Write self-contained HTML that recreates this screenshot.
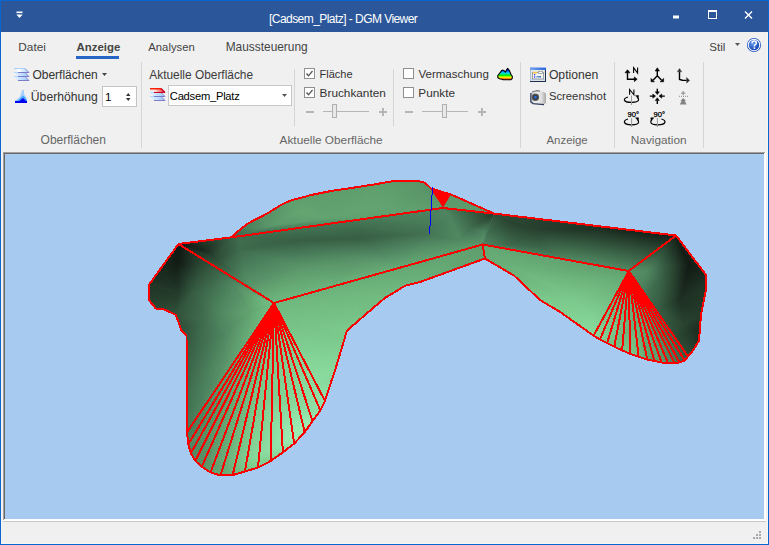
<!DOCTYPE html>
<html><head><meta charset="utf-8">
<style>
html,body{margin:0;padding:0;}
body{width:769px;height:545px;overflow:hidden;position:relative;background:#f0f0f0;font-family:"Liberation Sans",sans-serif;}
.a{position:absolute;}
.t{position:absolute;white-space:nowrap;line-height:1;color:#3b3b3b;}
.sep{position:absolute;width:1px;background:#d5d5d5;}
.cb{position:absolute;width:9px;height:9px;border:1px solid #8f8f8f;background:#fff;}
</style></head><body>
<!-- window frame -->
<div class="a" style="left:0;top:0;width:769px;height:545px;background:#0966d0;"></div>
<div class="a" style="left:1px;top:1px;width:767px;height:543px;background:#f0f0f0;"></div>
<div class="a" style="left:1px;top:1px;width:767px;height:31px;background:#2b579a;"></div>
<div class="a" style="left:1px;top:32px;width:1px;height:512px;background:#f8f5f1;"></div>
<div class="a" style="left:767px;top:32px;width:1px;height:512px;background:#f8f5f1;"></div>
<div class="a" style="left:1px;top:543px;width:767px;height:1px;background:#f8f5f1;"></div>
<!-- title bar -->
<svg class="a" style="left:0;top:0" width="769" height="32">
  <rect x="16.5" y="11.5" width="6" height="1.6" fill="#fff"/>
  <path d="M16.3 14.6 L22.7 14.6 L19.5 18 Z" fill="#fff"/>
  <rect x="673" y="15.5" width="6" height="3" fill="#fff"/>
  <rect x="708.5" y="10.5" width="8" height="8" fill="none" stroke="#fff" stroke-width="1"/>
  <rect x="708" y="10" width="9" height="2" fill="#fff"/>
  <path d="M745 11.5 L752 18.5 M752 11.5 L745 18.5" stroke="#fff" stroke-width="1.4"/>
</svg>
<div class="t" style="left:269px;top:13px;font-size:12px;letter-spacing:-0.55px;color:#fff;">[Cadsem_Platz] - DGM Viewer</div>

<!-- tabs -->
<div class="t" style="left:18.3px;top:42px;font-size:11.8px;color:#444;">Datei</div>
<div class="t" style="left:76.6px;top:42px;font-size:11.4px;font-weight:bold;color:#444;">Anzeige</div>
<div class="a" style="left:76px;top:56px;width:43px;height:3px;background:#2766c6;"></div>
<div class="t" style="left:148.3px;top:42px;font-size:11.3px;color:#444;">Analysen</div>
<div class="t" style="left:225.7px;top:42px;font-size:11.9px;color:#444;">Maussteuerung</div>
<div class="t" style="left:709.3px;top:41px;font-size:11.6px;color:#444;">Stil</div>
<svg class="a" style="left:0;top:30px" width="769" height="30">
  <path d="M735 13 L740 13 L737.5 16 Z" fill="#555"/>
  <defs><radialGradient id="hg" cx="0.4" cy="0.35" r="0.7"><stop offset="0" stop-color="#6aa0f0"/><stop offset="1" stop-color="#0a3cb0"/></radialGradient></defs>
  <circle cx="754" cy="15" r="7" fill="#1b4fc0"/>
  <circle cx="754" cy="15" r="6.2" fill="#fff"/>
  <circle cx="754" cy="15" r="5.2" fill="url(#hg)"/>
  <path d="M752 13.2 Q752 11 754.2 11 Q756.4 11 756.4 13 Q756.4 14.3 754.6 15.2 L754.4 16.5" fill="none" stroke="#fff" stroke-width="1.5"/>
  <rect x="753.6" y="17.4" width="1.6" height="1.6" fill="#fff"/>
</svg>

<!-- separators -->
<div class="sep" style="left:141px;top:62px;height:86px;"></div>
<div class="sep" style="left:294px;top:69px;height:57px;"></div>
<div class="sep" style="left:393px;top:69px;height:57px;"></div>
<div class="sep" style="left:520px;top:62px;height:86px;"></div>
<div class="sep" style="left:614px;top:62px;height:86px;"></div>
<div class="sep" style="left:703px;top:62px;height:86px;"></div>

<!-- group 1 -->
<svg class="a" style="left:0;top:0" width="32" height="106">
  <defs><linearGradient id="lg1" x1="0" x2="1"><stop offset="0" stop-color="#e6f2ff"/><stop offset="0.5" stop-color="#c4e0ff"/><stop offset="1" stop-color="#94c4f4"/></linearGradient>
  <linearGradient id="lg1t" x1="0" x2="1"><stop offset="0" stop-color="#cce4ff"/><stop offset="0.3" stop-color="#ffffff"/><stop offset="1" stop-color="#a8d0f8"/></linearGradient></defs>
  <path d="M14 76.5 H25 L29 80.5 H18 Z" fill="url(#lg1)"/><rect x="14" y="76" width="4" height="1" fill="#b4d8fc"/><rect x="18" y="80" width="11" height="1" fill="#7c7cc8"/><path d="M25 76.5 L29 80.5" stroke="#8a8ad0" stroke-width="1"/>
  <path d="M14 72.5 H25 L29 76.5 H18 Z" fill="url(#lg1)"/><rect x="14" y="72" width="4" height="1" fill="#b4d8fc"/><rect x="18" y="76" width="11" height="1" fill="#7c7cc8"/><path d="M25 72.5 L29 76.5" stroke="#8a8ad0" stroke-width="1"/>
  <path d="M14 68.5 H25 L29 72.5 H18 Z" fill="url(#lg1t)"/><rect x="14" y="68" width="11" height="1" fill="#a8d0f8"/><rect x="18" y="72" width="11" height="1" fill="#7c7cc8"/><path d="M25 68.5 L29 72.5" stroke="#8a8ad0" stroke-width="1"/>
  <path d="M15 103 L15 100.5 L19 98 L21 94 L22 90 L24 90 L24 94 L26 97 L27 100 L27 103 Z" fill="#a8d0ff"/>
  <path d="M17 101 L20.5 98 L23 95.5 L25.5 98 L27 100.5 L27 103 L15 103 Z" fill="#44a4ff"/>
  <path d="M15 101 L19.5 101 L23 98 L26 101 L27 101 L27 103 L15 103 Z" fill="#0000f0"/>
</svg>
<div class="t" style="left:32.4px;top:69px;font-size:12px;color:#333;">Oberflächen</div>
<svg class="a" style="left:100px;top:70px" width="10" height="8"><path d="M2 3 L7 3 L4.5 6 Z" fill="#444"/></svg>
<div class="t" style="left:30.8px;top:91px;font-size:12.2px;color:#333;">Überhöhung</div>
<div class="a" style="left:102px;top:86px;width:33px;height:19px;border:1px solid #c4c4c4;background:#fff;"></div>
<div class="t" style="left:105px;top:91px;font-size:11.6px;color:#000;">1</div>
<svg class="a" style="left:120px;top:88px" width="16" height="18"><path d="M6 8 L10.5 8 L8.25 5 Z M6 10 L10.5 10 L8.25 13 Z" fill="#333"/></svg>
<div class="t" style="left:40.6px;top:134px;font-size:12px;color:#666;">Oberflächen</div>

<!-- group 2 -->
<div class="t" style="left:149.3px;top:70px;font-size:11.9px;color:#3b3b3b;">Aktuelle Oberfläche</div>
<svg class="a" style="left:0;top:0" width="170" height="106">
  <defs><linearGradient id="rl" x1="0" x2="1"><stop offset="0" stop-color="#ffffff"/><stop offset="0.35" stop-color="#ffd8d8"/><stop offset="1" stop-color="#f02020"/></linearGradient></defs>
  <path d="M150 96.5 H161 L165 100.5 H154 Z" fill="url(#lg1)"/><rect x="150" y="96" width="4" height="1" fill="#b4d8fc"/><rect x="154" y="100" width="11" height="1" fill="#7c7cc8"/><path d="M161 96.5 L165 100.5" stroke="#8a8ad0" stroke-width="1"/>
  <path d="M150 92.5 H161 L165 96.5 H154 Z" fill="url(#lg1)"/><rect x="150" y="92" width="4" height="1" fill="#b4d8fc"/><rect x="154" y="96" width="11" height="1" fill="#7c7cc8"/><path d="M161 92.5 L165 96.5" stroke="#8a8ad0" stroke-width="1"/>
  <path d="M150 88.5 H161 L165 92.5 H154 Z" fill="url(#rl)"/><rect x="150" y="88" width="11" height="1.5" fill="#ff2000"/><rect x="154" y="92" width="11" height="1" fill="#c80020"/><path d="M161 88.5 L165 92.5" stroke="#c80020" stroke-width="1.2"/>
</svg>
<div class="a" style="left:168px;top:85px;width:122px;height:19px;border:1px solid #c8c8c8;background:#fff;"></div>
<div class="t" style="left:169.8px;top:91px;font-size:11.2px;letter-spacing:-0.25px;color:#000;">Cadsem_Platz</div>
<svg class="a" style="left:278px;top:90px" width="12" height="10"><path d="M4 4 L9 4 L6.5 7 Z" fill="#555"/></svg>

<div class="cb" style="left:304px;top:68px;"></div>
<div class="cb" style="left:304px;top:87px;"></div>
<svg class="a" style="left:304px;top:68px" width="11" height="30">
  <path d="M2.5 5.5 L4.5 7.8 L8.5 3" fill="none" stroke="#555" stroke-width="1.3"/>
  <path d="M2.5 24.5 L4.5 26.8 L8.5 22" fill="none" stroke="#555" stroke-width="1.3"/>
</svg>
<div class="t" style="left:319.6px;top:69px;font-size:11px;color:#333;">Fläche</div>
<div class="t" style="left:319.6px;top:88px;font-size:11.8px;color:#333;">Bruchkanten</div>
<svg class="a" style="left:300px;top:100px" width="95" height="22">
  <rect x="6" y="11" width="8" height="2" fill="#b5b5b5"/>
  <rect x="23" y="11" width="46" height="1" fill="#b5b5b5"/>
  <rect x="32.5" y="4.5" width="4" height="13" fill="#e8e8e8" stroke="#b0b0b0"/>
  <rect x="79" y="11" width="8" height="2" fill="#b5b5b5"/><rect x="82" y="8" width="2" height="8" fill="#b5b5b5"/>
</svg>
<div class="cb" style="left:403px;top:68px;"></div>
<div class="cb" style="left:403px;top:87px;"></div>
<div class="t" style="left:418.5px;top:69px;font-size:11.5px;color:#333;">Vermaschung</div>
<div class="t" style="left:418.3px;top:88px;font-size:11.8px;color:#333;">Punkte</div>
<svg class="a" style="left:398px;top:100px" width="95" height="22">
  <rect x="7" y="11" width="8" height="2" fill="#b5b5b5"/>
  <rect x="24" y="11" width="46" height="1" fill="#b5b5b5"/>
  <rect x="44.5" y="4.5" width="4" height="13" fill="#e8e8e8" stroke="#b0b0b0"/>
  <rect x="80" y="11" width="8" height="2" fill="#b5b5b5"/><rect x="83" y="8" width="2" height="8" fill="#b5b5b5"/>
</svg>
<svg class="a" style="left:0;top:0" width="520" height="90">
  <defs><linearGradient id="rb" gradientUnits="userSpaceOnUse" x1="0" y1="69" x2="0" y2="80"><stop offset="0.1" stop-color="#0010ff"/><stop offset="0.35" stop-color="#00d8ff"/><stop offset="0.58" stop-color="#00f000"/><stop offset="0.75" stop-color="#ffff00"/><stop offset="0.88" stop-color="#ff7000"/><stop offset="1" stop-color="#ff0000"/></linearGradient></defs>
  <path d="M497.8 75.5 L500.5 72.2 L501.5 70.6 L503 70.1 L504.5 71 L505.4 72.2 L506.5 70 L507.6 68.4 L509 70 L510 72 L511 74.5 L512.3 76.3 L512.3 78.3 L510.8 79.8 L503.2 79.8 L502 79.2 L499.5 78.8 L497.8 77.5 Z" fill="url(#rb)" stroke="#000" stroke-width="1.1" stroke-linejoin="round"/>
</svg>
<div class="t" style="left:279.6px;top:135px;font-size:11.8px;color:#666;">Aktuelle Oberfläche</div>

<!-- group 3 -->
<svg class="a" style="left:0;top:0" width="550" height="106">
  <defs><linearGradient id="tb" x1="0" y1="0" x2="1" y2="0"><stop offset="0" stop-color="#7aa4ec"/><stop offset="1" stop-color="#2a64dc"/></linearGradient>
  <linearGradient id="bb" x1="0" y1="0" x2="1" y2="0"><stop offset="0" stop-color="#70b0f8"/><stop offset="1" stop-color="#1a3a90"/></linearGradient>
  <linearGradient id="camg" x1="0" y1="0" x2="1" y2="0"><stop offset="0" stop-color="#b0b4bc"/><stop offset="0.3" stop-color="#f0f0f0"/><stop offset="0.7" stop-color="#e0e0e0"/><stop offset="1" stop-color="#a8a8a8"/></linearGradient></defs>
  <rect x="530" y="67" width="16" height="15" fill="#1e2e50"/>
  <rect x="530" y="67" width="15" height="14" fill="#e6e6e0"/>
  <rect x="530" y="67" width="1" height="14" fill="#b0c0dc"/>
  <rect x="530" y="67" width="16" height="3" fill="url(#tb)"/>
  <rect x="530" y="67" width="16" height="1" fill="#9ab8f0"/>
  <rect x="531" y="79" width="14" height="1.2" fill="#c8d8f0"/>
  <rect x="532.5" y="72.5" width="11" height="6.5" fill="#f4f4f0" stroke="#98a0a0" stroke-width="1"/>
  <rect x="533" y="72" width="4" height="1.5" fill="#f8c840"/>
  <rect x="538.5" y="71.5" width="4" height="2" fill="#fff" stroke="#98a0a0" stroke-width="0.8"/>
  <circle cx="534.6" cy="74.8" r="0.75" fill="#2020f0"/>
  <circle cx="534.6" cy="76.9" r="0.75" fill="#2020f0"/>
  <rect x="536" y="76.2" width="5" height="1.2" fill="url(#bb)"/>
  <path d="M531 93 L533 91 L537 90.5 L540 91 L544 92 L546 93.5 L546 103 L544 104.5 L533 103.5 L530.5 102 Z" fill="url(#camg)"/>
  <path d="M530.8 93 L530.8 102 L533 103.6 L544 104.6" fill="none" stroke="#2e3c5c" stroke-width="1.2"/>
  <path d="M532 92 L537 90.6 L540 91.2" fill="none" stroke="#7c7c7c" stroke-width="1.2"/>
  <circle cx="535.4" cy="97.3" r="3.7" fill="#5c5c5c"/>
  <circle cx="535.4" cy="97.3" r="2.6" fill="#3c3c40"/>
  <circle cx="535.4" cy="97.3" r="1.3" fill="#2070f0"/>
</svg>
<div class="t" style="left:548.9px;top:69px;font-size:12.2px;color:#333;">Optionen</div>
<div class="t" style="left:548.9px;top:91px;font-size:11.3px;color:#333;">Screenshot</div>
<div class="t" style="left:546.5px;top:135px;font-size:11.4px;color:#666;">Anzeige</div>

<!-- group 4 navigation -->
<svg class="a" style="left:0;top:0" width="700" height="130" fill="none" stroke="#000" stroke-width="1.4">
  <!-- icon1 -->
  <path d="M627.5 72 L627.5 79.2 L635 79.2"/>
  <path d="M625 72.8 L627.5 69.8 L630 72.8 Z M634.3 76.9 L637.2 79.2 L634.3 81.6 Z" fill="#000" stroke-width="0.6"/>
  <path d="M633.6 73 V67.6 L637.6 73 V67.6" stroke-width="1.1"/>
  <!-- icon2 -->
  <path d="M657.3 70.5 L657.3 75.8 L653 80.2 M657.3 75.8 L661.6 80.2"/>
  <path d="M655.2 71 L657.3 67.8 L659.4 71 Z M651 78.4 L651 81.8 L654.4 81.8 Z M663.6 78.4 L663.6 81.8 L660.2 81.8 Z" fill="#000" stroke-width="0.6"/>
  <!-- icon3 -->
  <path d="M679.5 71.5 L679.5 79.5 L682.5 80.2 L687 80.4"/>
  <path d="M677.3 71.8 L679.5 68.6 L681.7 71.8 Z" fill="#222" stroke="#555" stroke-width="0.6"/>
  <path d="M686.6 77.4 L689.6 80.4 L686.6 83 Z" fill="#222" stroke="#555" stroke-width="0.6"/>
  <!-- icon4 -->
  <path d="M629.6 94.8 V89.5 L633.9 94.8 V89.5" stroke-width="1.1"/>
  <path d="M628 97 Q624.2 98 624.4 100 Q625 102.4 631.5 102.4 Q638.6 102.4 638.6 99.6 Q638.6 98.2 637.2 97.4" stroke-width="1.2"/>
  <path d="M635.6 95.6 L638.6 95.6 L638.2 98.6 Z" fill="#000" stroke-width="0.5"/>
  <path d="M631.5 95.5 L631.5 105" stroke="#999" stroke-width="1"/>
  <!-- icon5 -->
  <path d="M657.3 88.8 L657.3 92 M657.3 100.5 L657.3 104 M649.8 96.1 L653 96.1 M661.6 96.1 L664.8 96.1"/>
  <path d="M655.2 91.8 L659.4 91.8 L657.3 94.6 Z M655.2 100.6 L659.4 100.6 L657.3 97.8 Z M652.8 94 L652.8 98.2 L655.6 96.1 Z M661.8 94 L661.8 98.2 L659 96.1 Z" fill="#000" stroke-width="0.5"/>
  <!-- icon6 gray -->
  <path d="M683.2 91 L683.2 95.2 M681 93.2 L685.4 93.2" stroke="#8a8a8a" stroke-width="1"/>
  <path d="M679 96.3 L688 96.3" stroke="#8a8a8a" stroke-width="1" stroke-dasharray="1 1"/>
  <path d="M683.2 98 L686 101 L684.8 101 L686.6 104.4 L679.8 104.4 L681.6 101 L680.4 101 Z" fill="#848484" stroke="none"/>
  <!-- icon7 -->
  <text x="627.6" y="116.8" font-family="Liberation Sans" font-size="7.6" fill="#000" stroke="#000" stroke-width="0.25">90°</text>
  <path d="M628 119 Q624.2 120 624.4 122 Q625 124.8 631.5 124.8 Q638.6 124.8 638.6 122 Q638.6 120.4 637.2 119.6" stroke-width="1.2"/>
  <path d="M635.6 117.8 L638.6 117.8 L638.2 120.8 Z" fill="#000" stroke-width="0.5"/>
  <path d="M631.6 118 L631.6 127" stroke="#999" stroke-width="1"/>
  <!-- icon8 -->
  <text x="653.6" y="116.8" font-family="Liberation Sans" font-size="7.6" fill="#000" stroke="#000" stroke-width="0.25">90°</text>
  <path d="M661.4 119 Q665.2 120 665 122 Q664.4 124.8 657.9 124.8 Q650.8 124.8 650.8 122 Q650.8 120.4 652.2 119.6" stroke-width="1.2"/>
  <path d="M653.8 117.8 L650.8 117.8 L651.2 120.8 Z" fill="#000" stroke-width="0.5"/>
  <path d="M657.4 118 L657.4 127" stroke="#999" stroke-width="1"/>
</svg>
<div class="t" style="left:630.8px;top:135px;font-size:11.8px;color:#666;">Navigation</div>

<!-- viewport frame -->
<div class="a" style="left:3px;top:152px;width:763px;height:369px;background:#fff;"></div>
<div class="a" style="left:3px;top:152px;width:762px;height:1px;background:#a0a0a0;"></div>
<div class="a" style="left:3px;top:152px;width:1px;height:368px;background:#a0a0a0;"></div>
<div class="a" style="left:4px;top:153px;width:760px;height:1px;background:#696969;"></div>
<div class="a" style="left:4px;top:153px;width:1px;height:366px;background:#696969;"></div>
<div class="a" style="left:5px;top:154px;width:759px;height:365px;background:#a6caf0;"></div>
<div class="a" style="left:3px;top:521px;width:763px;height:1px;background:#c8c8c8;"></div>
<!-- status grip -->
<svg class="a" style="left:750px;top:528px" width="14" height="14">
  <rect x="9" y="3" width="2" height="2" fill="#a8a8a8"/>
  <rect x="6" y="6" width="2" height="2" fill="#a8a8a8"/><rect x="9" y="6" width="2" height="2" fill="#a8a8a8"/>
  <rect x="3" y="9" width="2" height="2" fill="#a8a8a8"/><rect x="6" y="9" width="2" height="2" fill="#a8a8a8"/><rect x="9" y="9" width="2" height="2" fill="#a8a8a8"/>
</svg>

<!-- 3D scene -->
<svg id="scene" class="a" style="left:0;top:0" width="769" height="545">
<defs><clipPath id="cF1"><polygon points="178.5,244.0 150.1,283.2 148.8,285.0 148.8,299.7 155.6,308.5 162.9,308.9 175.8,314.8 181.3,330.0 186.5,336.0 187.0,432.0 274.0,303.0"/></clipPath><linearGradient id="q1" gradientUnits="userSpaceOnUse" x1="246.60" y1="420.90" x2="226.30" y2="311.88"><stop offset="0.00" stop-color="#487a58"/><stop offset="0.50" stop-color="#5f9d6d"/><stop offset="1.00" stop-color="#74bf84"/></linearGradient><linearGradient id="q2" gradientUnits="userSpaceOnUse" x1="206.56" y1="375.69" x2="230.44" y2="383.98"><stop offset="0.00" stop-color="#487a58"/><stop offset="0.50" stop-color="#589267"/><stop offset="1.00" stop-color="#66aa76"/></linearGradient><linearGradient id="q3" gradientUnits="userSpaceOnUse" x1="189.26" y1="367.23" x2="220.28" y2="376.48"><stop offset="0.00" stop-color="#3b6549"/><stop offset="0.50" stop-color="#497c5a"/><stop offset="1.00" stop-color="#589267"/></linearGradient><linearGradient id="q4" gradientUnits="userSpaceOnUse" x1="121.30" y1="343.74" x2="208.08" y2="398.71"><stop offset="0.00" stop-color="#263e2d"/><stop offset="0.50" stop-color="#365c42"/><stop offset="1.00" stop-color="#487a58"/></linearGradient><linearGradient id="q5" gradientUnits="userSpaceOnUse" x1="150.61" y1="336.75" x2="184.16" y2="335.28"><stop offset="0.00" stop-color="#263e2d"/><stop offset="0.50" stop-color="#33573e"/><stop offset="1.00" stop-color="#416f50"/></linearGradient><linearGradient id="q6" gradientUnits="userSpaceOnUse" x1="203.54" y1="233.79" x2="237.79" y2="317.77"><stop offset="0.00" stop-color="#0e1612"/><stop offset="0.50" stop-color="#3f6b4d"/><stop offset="1.00" stop-color="#74bf84"/></linearGradient><linearGradient id="q7" gradientUnits="userSpaceOnUse" x1="234.19" y1="261.10" x2="238.20" y2="306.19"><stop offset="0.00" stop-color="#2d4b35"/><stop offset="0.50" stop-color="#508661"/><stop offset="1.00" stop-color="#74bf84"/></linearGradient><linearGradient id="q8" gradientUnits="userSpaceOnUse" x1="197.47" y1="270.50" x2="224.37" y2="292.19"><stop offset="0.00" stop-color="#2d4b35"/><stop offset="0.50" stop-color="#3c6649"/><stop offset="1.00" stop-color="#4e8460"/></linearGradient><linearGradient id="q9" gradientUnits="userSpaceOnUse" x1="256.35" y1="285.64" x2="254.77" y2="301.02"><stop offset="0.00" stop-color="#4e8460"/><stop offset="0.50" stop-color="#62a270"/><stop offset="1.00" stop-color="#74bf84"/></linearGradient><linearGradient id="q10" gradientUnits="userSpaceOnUse" x1="197.31" y1="399.86" x2="211.08" y2="404.28"><stop offset="0.00" stop-color="#487a58"/><stop offset="0.50" stop-color="#508661"/><stop offset="1.00" stop-color="#589267"/></linearGradient><linearGradient id="q11" gradientUnits="userSpaceOnUse" x1="183.36" y1="411.34" x2="192.67" y2="414.33"><stop offset="0.00" stop-color="#416f50"/><stop offset="0.50" stop-color="#447454"/><stop offset="1.00" stop-color="#487a58"/></linearGradient><linearGradient id="q12" gradientUnits="userSpaceOnUse" x1="188.79" y1="388.61" x2="219.38" y2="393.41"><stop offset="0.00" stop-color="#416f50"/><stop offset="0.50" stop-color="#4c815e"/><stop offset="1.00" stop-color="#589267"/></linearGradient><linearGradient id="q13" gradientUnits="userSpaceOnUse" x1="172.46" y1="354.37" x2="199.66" y2="363.90"><stop offset="0.00" stop-color="#31523b"/><stop offset="0.50" stop-color="#396045"/><stop offset="1.00" stop-color="#416f50"/></linearGradient><linearGradient id="q14" gradientUnits="userSpaceOnUse" x1="168.48" y1="306.53" x2="182.85" y2="400.63"><stop offset="0.00" stop-color="#2b4833"/><stop offset="0.50" stop-color="#365b41"/><stop offset="1.00" stop-color="#416f50"/></linearGradient><linearGradient id="q15" gradientUnits="userSpaceOnUse" x1="178.92" y1="305.19" x2="206.86" y2="314.27"><stop offset="0.00" stop-color="#31523b"/><stop offset="0.50" stop-color="#396145"/><stop offset="1.00" stop-color="#416f50"/></linearGradient><linearGradient id="q16" gradientUnits="userSpaceOnUse" x1="181.81" y1="324.74" x2="200.47" y2="312.87"><stop offset="0.00" stop-color="#31523b"/><stop offset="0.50" stop-color="#396045"/><stop offset="1.00" stop-color="#416f50"/></linearGradient><linearGradient id="q17" gradientUnits="userSpaceOnUse" x1="231.04" y1="297.07" x2="260.50" y2="298.47"><stop offset="0.00" stop-color="#4e8460"/><stop offset="0.50" stop-color="#5e9c6c"/><stop offset="1.00" stop-color="#6cb47c"/></linearGradient><linearGradient id="q18" gradientUnits="userSpaceOnUse" x1="249.33" y1="317.19" x2="267.53" y2="323.06"><stop offset="0.00" stop-color="#64a672"/><stop offset="0.50" stop-color="#6bb37b"/><stop offset="1.00" stop-color="#74bf84"/></linearGradient><linearGradient id="q19" gradientUnits="userSpaceOnUse" x1="249.85" y1="308.75" x2="273.11" y2="300.50"><stop offset="0.00" stop-color="#64a672"/><stop offset="0.50" stop-color="#6bb37b"/><stop offset="1.00" stop-color="#74bf84"/></linearGradient><linearGradient id="q20" gradientUnits="userSpaceOnUse" x1="180.63" y1="245.66" x2="150.99" y2="283.77"><stop offset="0.00" stop-color="#0e1612"/><stop offset="0.50" stop-color="#17251b"/><stop offset="1.00" stop-color="#203425"/></linearGradient><linearGradient id="q21" gradientUnits="userSpaceOnUse" x1="177.35" y1="264.43" x2="201.30" y2="280.21"><stop offset="0.00" stop-color="#111b15"/><stop offset="0.50" stop-color="#243c2b"/><stop offset="1.00" stop-color="#365c42"/></linearGradient><linearGradient id="q22" gradientUnits="userSpaceOnUse" x1="176.50" y1="255.57" x2="203.44" y2="260.22"><stop offset="0.00" stop-color="#0e1612"/><stop offset="0.50" stop-color="#1e3023"/><stop offset="1.00" stop-color="#2d4b35"/></linearGradient><linearGradient id="q23" gradientUnits="userSpaceOnUse" x1="181.79" y1="258.57" x2="161.66" y2="263.12"><stop offset="0.00" stop-color="#0e1612"/><stop offset="0.50" stop-color="#142018"/><stop offset="1.00" stop-color="#1a2a1e"/></linearGradient><linearGradient id="q24" gradientUnits="userSpaceOnUse" x1="189.59" y1="334.17" x2="184.74" y2="344.16"><stop offset="0.00" stop-color="#31523b"/><stop offset="0.50" stop-color="#365c42"/><stop offset="1.00" stop-color="#3b6549"/></linearGradient><linearGradient id="q25" gradientUnits="userSpaceOnUse" x1="181.79" y1="329.17" x2="187.91" y2="335.05"><stop offset="0.00" stop-color="#31523b"/><stop offset="0.50" stop-color="#32543c"/><stop offset="1.00" stop-color="#33573e"/></linearGradient><linearGradient id="q26" gradientUnits="userSpaceOnUse" x1="187.29" y1="333.87" x2="202.81" y2="335.99"><stop offset="0.00" stop-color="#33573e"/><stop offset="0.50" stop-color="#3a6347"/><stop offset="1.00" stop-color="#416f50"/></linearGradient><linearGradient id="q27" gradientUnits="userSpaceOnUse" x1="183.50" y1="327.73" x2="204.93" y2="327.91"><stop offset="0.00" stop-color="#31523b"/><stop offset="0.50" stop-color="#396045"/><stop offset="1.00" stop-color="#416f50"/></linearGradient><linearGradient id="q28" gradientUnits="userSpaceOnUse" x1="175.64" y1="296.28" x2="186.99" y2="302.98"><stop offset="0.00" stop-color="#233929"/><stop offset="0.50" stop-color="#2d4b35"/><stop offset="1.00" stop-color="#365c42"/></linearGradient><linearGradient id="q29" gradientUnits="userSpaceOnUse" x1="165.27" y1="273.68" x2="162.80" y2="290.63"><stop offset="0.00" stop-color="#1a2a1e"/><stop offset="0.50" stop-color="#1f3124"/><stop offset="1.00" stop-color="#233929"/></linearGradient><linearGradient id="q30" gradientUnits="userSpaceOnUse" x1="171.32" y1="277.96" x2="194.88" y2="288.65"><stop offset="0.00" stop-color="#111b15"/><stop offset="0.50" stop-color="#243c2b"/><stop offset="1.00" stop-color="#365c42"/></linearGradient><linearGradient id="q31" gradientUnits="userSpaceOnUse" x1="177.68" y1="263.89" x2="168.59" y2="289.57"><stop offset="0.00" stop-color="#111b15"/><stop offset="0.50" stop-color="#1a2a1e"/><stop offset="1.00" stop-color="#233929"/></linearGradient><linearGradient id="q32" gradientUnits="userSpaceOnUse" x1="158.77" y1="285.38" x2="158.21" y2="300.35"><stop offset="0.00" stop-color="#213526"/><stop offset="0.50" stop-color="#233929"/><stop offset="1.00" stop-color="#263e2d"/></linearGradient><linearGradient id="q33" gradientUnits="userSpaceOnUse" x1="158.74" y1="282.81" x2="158.97" y2="293.20"><stop offset="0.00" stop-color="#203425"/><stop offset="0.50" stop-color="#223627"/><stop offset="1.00" stop-color="#233929"/></linearGradient><linearGradient id="q34" gradientUnits="userSpaceOnUse" x1="224.82" y1="325.78" x2="247.77" y2="332.80"><stop offset="0.00" stop-color="#4e8460"/><stop offset="0.50" stop-color="#5b976a"/><stop offset="1.00" stop-color="#66aa76"/></linearGradient><linearGradient id="q35" gradientUnits="userSpaceOnUse" x1="219.54" y1="344.85" x2="242.72" y2="350.63"><stop offset="0.00" stop-color="#4e8460"/><stop offset="0.50" stop-color="#5b976a"/><stop offset="1.00" stop-color="#66aa76"/></linearGradient><linearGradient id="q36" gradientUnits="userSpaceOnUse" x1="196.39" y1="343.78" x2="227.31" y2="353.78"><stop offset="0.00" stop-color="#3b6549"/><stop offset="0.50" stop-color="#497c5a"/><stop offset="1.00" stop-color="#589267"/></linearGradient><linearGradient id="q37" gradientUnits="userSpaceOnUse" x1="195.44" y1="334.08" x2="221.98" y2="335.39"><stop offset="0.00" stop-color="#3b6549"/><stop offset="0.50" stop-color="#447454"/><stop offset="1.00" stop-color="#4e8460"/></linearGradient><linearGradient id="q38" gradientUnits="userSpaceOnUse" x1="169.62" y1="294.70" x2="174.42" y2="315.12"><stop offset="0.00" stop-color="#233929"/><stop offset="0.50" stop-color="#2a4632"/><stop offset="1.00" stop-color="#31523b"/></linearGradient><linearGradient id="q39" gradientUnits="userSpaceOnUse" x1="164.99" y1="306.88" x2="169.32" y2="332.01"><stop offset="0.00" stop-color="#2b4833"/><stop offset="0.50" stop-color="#2e4d37"/><stop offset="1.00" stop-color="#31523b"/></linearGradient><linearGradient id="q40" gradientUnits="userSpaceOnUse" x1="167.10" y1="320.19" x2="176.51" y2="316.74"><stop offset="0.00" stop-color="#2b4834"/><stop offset="0.50" stop-color="#2e4d37"/><stop offset="1.00" stop-color="#31523b"/></linearGradient><linearGradient id="q41" gradientUnits="userSpaceOnUse" x1="155.71" y1="299.83" x2="155.95" y2="309.18"><stop offset="0.00" stop-color="#263e2d"/><stop offset="0.50" stop-color="#294330"/><stop offset="1.00" stop-color="#2b4834"/></linearGradient><linearGradient id="q42" gradientUnits="userSpaceOnUse" x1="162.73" y1="293.93" x2="163.86" y2="308.93"><stop offset="0.00" stop-color="#233929"/><stop offset="0.50" stop-color="#27412e"/><stop offset="1.00" stop-color="#2b4834"/></linearGradient><linearGradient id="q43" gradientUnits="userSpaceOnUse" x1="205.64" y1="324.03" x2="223.46" y2="321.20"><stop offset="0.00" stop-color="#416f50"/><stop offset="0.50" stop-color="#497c5a"/><stop offset="1.00" stop-color="#518962"/></linearGradient><linearGradient id="q44" gradientUnits="userSpaceOnUse" x1="219.32" y1="322.26" x2="251.73" y2="315.45"><stop offset="0.00" stop-color="#4e8460"/><stop offset="0.50" stop-color="#599568"/><stop offset="1.00" stop-color="#64a672"/></linearGradient><linearGradient id="q45" gradientUnits="userSpaceOnUse" x1="224.61" y1="297.19" x2="251.62" y2="310.77"><stop offset="0.00" stop-color="#4e8460"/><stop offset="0.50" stop-color="#599568"/><stop offset="1.00" stop-color="#64a672"/></linearGradient><linearGradient id="q46" gradientUnits="userSpaceOnUse" x1="196.03" y1="286.53" x2="227.06" y2="301.52"><stop offset="0.00" stop-color="#365c42"/><stop offset="0.50" stop-color="#437252"/><stop offset="1.00" stop-color="#518962"/></linearGradient><linearGradient id="q47" gradientUnits="userSpaceOnUse" x1="192.30" y1="307.58" x2="222.14" y2="309.00"><stop offset="0.00" stop-color="#365c42"/><stop offset="0.50" stop-color="#437252"/><stop offset="1.00" stop-color="#518962"/></linearGradient><clipPath id="cF2"><polygon points="274.0,303.0 187.0,432.0 188.3,444.5 191.0,453.5 195.4,461.0 202.0,467.0 210.8,472.5 220.7,475.5 232.8,475.0 245.0,471.5 258.0,467.5 270.7,461.0 282.9,452.3 294.2,443.6 304.7,432.3 312.5,421.0 320.4,410.5 325.0,401.0"/></clipPath><linearGradient id="q48" gradientUnits="userSpaceOnUse" x1="250.91" y1="350.93" x2="330.62" y2="389.34"><stop offset="0.00" stop-color="#74bf84"/><stop offset="0.50" stop-color="#81d093"/><stop offset="1.00" stop-color="#90e2a8"/></linearGradient><linearGradient id="q49" gradientUnits="userSpaceOnUse" x1="197.58" y1="379.12" x2="256.42" y2="390.88"><stop offset="0.00" stop-color="#467756"/><stop offset="0.50" stop-color="#5e9c6c"/><stop offset="1.00" stop-color="#74bf84"/></linearGradient><linearGradient id="q50" gradientUnits="userSpaceOnUse" x1="231.83" y1="369.74" x2="265.27" y2="377.61"><stop offset="0.00" stop-color="#5e9c6c"/><stop offset="0.50" stop-color="#6cb47c"/><stop offset="1.00" stop-color="#7cca8c"/></linearGradient><linearGradient id="q51" gradientUnits="userSpaceOnUse" x1="190.32" y1="426.89" x2="208.03" y2="438.41"><stop offset="0.00" stop-color="#467756"/><stop offset="0.50" stop-color="#528a63"/><stop offset="1.00" stop-color="#5e9c6c"/></linearGradient><linearGradient id="q52" gradientUnits="userSpaceOnUse" x1="270.40" y1="383.74" x2="318.02" y2="414.21"><stop offset="0.00" stop-color="#7cca8c"/><stop offset="0.50" stop-color="#86d69a"/><stop offset="1.00" stop-color="#91e2a9"/></linearGradient><linearGradient id="q53" gradientUnits="userSpaceOnUse" x1="269.69" y1="393.72" x2="295.91" y2="434.14"><stop offset="0.00" stop-color="#7cca8c"/><stop offset="0.50" stop-color="#8bdca1"/><stop offset="1.00" stop-color="#9cecb4"/></linearGradient><linearGradient id="q54" gradientUnits="userSpaceOnUse" x1="201.54" y1="464.84" x2="211.98" y2="470.18"><stop offset="0.00" stop-color="#569066"/><stop offset="0.50" stop-color="#5a9669"/><stop offset="1.00" stop-color="#5e9c6c"/></linearGradient><linearGradient id="q55" gradientUnits="userSpaceOnUse" x1="203.87" y1="469.98" x2="220.45" y2="469.31"><stop offset="0.00" stop-color="#569066"/><stop offset="0.50" stop-color="#5f9f6e"/><stop offset="1.00" stop-color="#68ad77"/></linearGradient><linearGradient id="q56" gradientUnits="userSpaceOnUse" x1="196.58" y1="459.68" x2="203.23" y2="465.62"><stop offset="0.00" stop-color="#548d65"/><stop offset="0.50" stop-color="#558f66"/><stop offset="1.00" stop-color="#579167"/></linearGradient><linearGradient id="q57" gradientUnits="userSpaceOnUse" x1="211.31" y1="456.78" x2="223.62" y2="479.53"><stop offset="0.00" stop-color="#569066"/><stop offset="0.50" stop-color="#62a270"/><stop offset="1.00" stop-color="#6cb47c"/></linearGradient><linearGradient id="q58" gradientUnits="userSpaceOnUse" x1="194.01" y1="451.79" x2="198.51" y2="463.00"><stop offset="0.00" stop-color="#4e8460"/><stop offset="0.50" stop-color="#528a63"/><stop offset="1.00" stop-color="#569066"/></linearGradient><linearGradient id="q59" gradientUnits="userSpaceOnUse" x1="188.27" y1="442.05" x2="220.30" y2="441.61"><stop offset="0.00" stop-color="#4f8561"/><stop offset="0.50" stop-color="#569166"/><stop offset="1.00" stop-color="#5e9c6c"/></linearGradient><linearGradient id="q60" gradientUnits="userSpaceOnUse" x1="191.48" y1="454.08" x2="198.92" y2="450.75"><stop offset="0.00" stop-color="#4e8460"/><stop offset="0.50" stop-color="#528a63"/><stop offset="1.00" stop-color="#569066"/></linearGradient><linearGradient id="q61" gradientUnits="userSpaceOnUse" x1="261.99" y1="466.02" x2="258.30" y2="456.04"><stop offset="0.00" stop-color="#7fcd90"/><stop offset="0.50" stop-color="#82d295"/><stop offset="1.00" stop-color="#86d69a"/></linearGradient><linearGradient id="q62" gradientUnits="userSpaceOnUse" x1="247.58" y1="473.05" x2="255.64" y2="459.58"><stop offset="0.00" stop-color="#73be83"/><stop offset="0.50" stop-color="#7cca8c"/><stop offset="1.00" stop-color="#86d69a"/></linearGradient><linearGradient id="q63" gradientUnits="userSpaceOnUse" x1="220.14" y1="419.47" x2="260.46" y2="430.35"><stop offset="0.00" stop-color="#5e9c6c"/><stop offset="0.50" stop-color="#70ba80"/><stop offset="1.00" stop-color="#86d69a"/></linearGradient><linearGradient id="q64" gradientUnits="userSpaceOnUse" x1="240.98" y1="477.31" x2="246.39" y2="456.30"><stop offset="0.00" stop-color="#6cb47c"/><stop offset="0.50" stop-color="#78c488"/><stop offset="1.00" stop-color="#86d69a"/></linearGradient><linearGradient id="q65" gradientUnits="userSpaceOnUse" x1="269.18" y1="461.12" x2="268.58" y2="453.42"><stop offset="0.00" stop-color="#80cf91"/><stop offset="0.50" stop-color="#85d599"/><stop offset="1.00" stop-color="#8bdca1"/></linearGradient><linearGradient id="q66" gradientUnits="userSpaceOnUse" x1="205.78" y1="470.41" x2="253.22" y2="458.93"><stop offset="0.00" stop-color="#569066"/><stop offset="0.50" stop-color="#6cb47c"/><stop offset="1.00" stop-color="#86d69a"/></linearGradient><linearGradient id="q67" gradientUnits="userSpaceOnUse" x1="207.25" y1="442.61" x2="254.19" y2="452.18"><stop offset="0.00" stop-color="#569066"/><stop offset="0.50" stop-color="#6cb47c"/><stop offset="1.00" stop-color="#86d69a"/></linearGradient><linearGradient id="q68" gradientUnits="userSpaceOnUse" x1="250.46" y1="424.88" x2="290.29" y2="440.15"><stop offset="0.00" stop-color="#7cca8c"/><stop offset="0.50" stop-color="#8bdca1"/><stop offset="1.00" stop-color="#9cecb4"/></linearGradient><linearGradient id="q69" gradientUnits="userSpaceOnUse" x1="276.06" y1="457.26" x2="275.43" y2="437.52"><stop offset="0.00" stop-color="#86d69a"/><stop offset="0.50" stop-color="#90e2a8"/><stop offset="1.00" stop-color="#9cecb4"/></linearGradient><linearGradient id="q70" gradientUnits="userSpaceOnUse" x1="278.01" y1="388.96" x2="302.79" y2="429.41"><stop offset="0.00" stop-color="#7cca8c"/><stop offset="0.50" stop-color="#8bdca1"/><stop offset="1.00" stop-color="#9cecb4"/></linearGradient><linearGradient id="q71" gradientUnits="userSpaceOnUse" x1="294.28" y1="393.31" x2="300.15" y2="423.41"><stop offset="0.00" stop-color="#7cca8c"/><stop offset="0.50" stop-color="#8adba0"/><stop offset="1.00" stop-color="#9aebb2"/></linearGradient><linearGradient id="q72" gradientUnits="userSpaceOnUse" x1="315.61" y1="419.53" x2="313.50" y2="418.41"><stop offset="0.00" stop-color="#91e2a9"/><stop offset="0.50" stop-color="#96e7ae"/><stop offset="1.00" stop-color="#9cecb4"/></linearGradient><linearGradient id="q73" gradientUnits="userSpaceOnUse" x1="283.28" y1="452.59" x2="293.76" y2="438.70"><stop offset="0.00" stop-color="#8bdca1"/><stop offset="0.50" stop-color="#93e4ab"/><stop offset="1.00" stop-color="#9cecb4"/></linearGradient><linearGradient id="q74" gradientUnits="userSpaceOnUse" x1="303.24" y1="433.25" x2="301.48" y2="430.53"><stop offset="0.00" stop-color="#98e9b0"/><stop offset="0.50" stop-color="#9aeab2"/><stop offset="1.00" stop-color="#9cecb4"/></linearGradient><linearGradient id="q75" gradientUnits="userSpaceOnUse" x1="298.47" y1="439.15" x2="293.58" y2="434.71"><stop offset="0.00" stop-color="#98e9b0"/><stop offset="0.50" stop-color="#9aeab2"/><stop offset="1.00" stop-color="#9cecb4"/></linearGradient><clipPath id="cF3"><polygon points="274.0,303.0 325.0,401.0 331.7,380.0 335.0,370.7 344.2,340.0 346.4,332.0 352.3,326.0 364.0,315.8 384.6,298.2 405.2,285.7 420.0,282.0 485.0,258.5 482.6,244.5"/></clipPath><linearGradient id="q76" gradientUnits="userSpaceOnUse" x1="425.78" y1="244.94" x2="386.79" y2="415.15"><stop offset="0.00" stop-color="#61a16f"/><stop offset="0.50" stop-color="#76c186"/><stop offset="1.00" stop-color="#90e2a8"/></linearGradient><linearGradient id="q77" gradientUnits="userSpaceOnUse" x1="467.90" y1="240.73" x2="455.02" y2="290.97"><stop offset="0.00" stop-color="#5e9c6c"/><stop offset="0.50" stop-color="#64a672"/><stop offset="1.00" stop-color="#69af79"/></linearGradient><linearGradient id="q78" gradientUnits="userSpaceOnUse" x1="420.00" y1="281.99" x2="383.86" y2="296.34"><stop offset="0.00" stop-color="#69af79"/><stop offset="0.50" stop-color="#6eb67e"/><stop offset="1.00" stop-color="#72bd82"/></linearGradient><linearGradient id="q79" gradientUnits="userSpaceOnUse" x1="463.72" y1="284.01" x2="416.74" y2="261.56"><stop offset="0.00" stop-color="#5e9c6c"/><stop offset="0.50" stop-color="#65a874"/><stop offset="1.00" stop-color="#6db57d"/></linearGradient><linearGradient id="q80" gradientUnits="userSpaceOnUse" x1="399.00" y1="306.71" x2="383.16" y2="293.25"><stop offset="0.00" stop-color="#69af79"/><stop offset="0.50" stop-color="#6fb87f"/><stop offset="1.00" stop-color="#75c085"/></linearGradient><linearGradient id="q81" gradientUnits="userSpaceOnUse" x1="287.54" y1="301.44" x2="296.65" y2="380.39"><stop offset="0.00" stop-color="#6fb87f"/><stop offset="0.50" stop-color="#7cca8c"/><stop offset="1.00" stop-color="#8cdda2"/></linearGradient><linearGradient id="q82" gradientUnits="userSpaceOnUse" x1="369.65" y1="255.44" x2="373.32" y2="293.38"><stop offset="0.00" stop-color="#5e9c6c"/><stop offset="0.50" stop-color="#66aa76"/><stop offset="1.00" stop-color="#6fb87f"/></linearGradient><linearGradient id="q83" gradientUnits="userSpaceOnUse" x1="414.01" y1="249.39" x2="416.95" y2="290.62"><stop offset="0.00" stop-color="#5e9c6c"/><stop offset="0.50" stop-color="#66aa76"/><stop offset="1.00" stop-color="#6fb87f"/></linearGradient><linearGradient id="q84" gradientUnits="userSpaceOnUse" x1="382.70" y1="287.77" x2="383.66" y2="298.29"><stop offset="0.00" stop-color="#6db57d"/><stop offset="0.50" stop-color="#6fb97f"/><stop offset="1.00" stop-color="#72bd82"/></linearGradient><linearGradient id="q85" gradientUnits="userSpaceOnUse" x1="310.61" y1="299.45" x2="312.48" y2="318.79"><stop offset="0.00" stop-color="#6fb87f"/><stop offset="0.50" stop-color="#72bd82"/><stop offset="1.00" stop-color="#76c186"/></linearGradient><linearGradient id="q86" gradientUnits="userSpaceOnUse" x1="365.58" y1="292.52" x2="372.98" y2="312.47"><stop offset="0.00" stop-color="#6fb87f"/><stop offset="0.50" stop-color="#72bc82"/><stop offset="1.00" stop-color="#75c085"/></linearGradient><linearGradient id="q87" gradientUnits="userSpaceOnUse" x1="380.35" y1="275.78" x2="364.82" y2="374.68"><stop offset="0.00" stop-color="#69af79"/><stop offset="0.50" stop-color="#77c387"/><stop offset="1.00" stop-color="#88d89d"/></linearGradient><linearGradient id="q88" gradientUnits="userSpaceOnUse" x1="344.04" y1="319.01" x2="351.82" y2="367.29"><stop offset="0.00" stop-color="#75c085"/><stop offset="0.50" stop-color="#7ecc8e"/><stop offset="1.00" stop-color="#88d89d"/></linearGradient><linearGradient id="q89" gradientUnits="userSpaceOnUse" x1="311.67" y1="320.00" x2="311.67" y2="380.00"><stop offset="0.00" stop-color="#76c186"/><stop offset="0.50" stop-color="#80cf92"/><stop offset="1.00" stop-color="#8cdda2"/></linearGradient><linearGradient id="q90" gradientUnits="userSpaceOnUse" x1="326.43" y1="320.04" x2="326.36" y2="369.99"><stop offset="0.00" stop-color="#76c186"/><stop offset="0.50" stop-color="#7ecc8f"/><stop offset="1.00" stop-color="#88d89d"/></linearGradient><linearGradient id="q91" gradientUnits="userSpaceOnUse" x1="299.13" y1="324.10" x2="345.58" y2="333.96"><stop offset="0.00" stop-color="#76c186"/><stop offset="0.50" stop-color="#79c689"/><stop offset="1.00" stop-color="#7cca8c"/></linearGradient><linearGradient id="q92" gradientUnits="userSpaceOnUse" x1="352.27" y1="288.86" x2="363.24" y2="397.13"><stop offset="0.00" stop-color="#69af79"/><stop offset="0.50" stop-color="#7ac88a"/><stop offset="1.00" stop-color="#90e2a8"/></linearGradient><linearGradient id="q93" gradientUnits="userSpaceOnUse" x1="393.91" y1="355.28" x2="346.28" y2="338.32"><stop offset="0.00" stop-color="#69af79"/><stop offset="0.50" stop-color="#77c387"/><stop offset="1.00" stop-color="#88d89d"/></linearGradient><linearGradient id="q94" gradientUnits="userSpaceOnUse" x1="322.83" y1="376.64" x2="315.03" y2="397.22"><stop offset="0.00" stop-color="#88d89d"/><stop offset="0.50" stop-color="#8cdda2"/><stop offset="1.00" stop-color="#90e2a8"/></linearGradient><linearGradient id="q95" gradientUnits="userSpaceOnUse" x1="331.30" y1="380.86" x2="305.19" y2="368.78"><stop offset="0.00" stop-color="#88d89d"/><stop offset="0.50" stop-color="#8adb9f"/><stop offset="1.00" stop-color="#8cdda2"/></linearGradient><linearGradient id="q96" gradientUnits="userSpaceOnUse" x1="335.10" y1="298.29" x2="339.43" y2="327.88"><stop offset="0.00" stop-color="#6fb87f"/><stop offset="0.50" stop-color="#75c085"/><stop offset="1.00" stop-color="#7bc88b"/></linearGradient><linearGradient id="q97" gradientUnits="userSpaceOnUse" x1="329.06" y1="312.20" x2="335.16" y2="334.91"><stop offset="0.00" stop-color="#76c186"/><stop offset="0.50" stop-color="#79c689"/><stop offset="1.00" stop-color="#7cca8c"/></linearGradient><linearGradient id="q98" gradientUnits="userSpaceOnUse" x1="367.35" y1="300.31" x2="349.85" y2="324.20"><stop offset="0.00" stop-color="#6fb87f"/><stop offset="0.50" stop-color="#75c085"/><stop offset="1.00" stop-color="#7bc88b"/></linearGradient><linearGradient id="q99" gradientUnits="userSpaceOnUse" x1="357.45" y1="329.20" x2="351.01" y2="326.05"><stop offset="0.00" stop-color="#75c085"/><stop offset="0.50" stop-color="#78c588"/><stop offset="1.00" stop-color="#7cca8c"/></linearGradient><linearGradient id="q100" gradientUnits="userSpaceOnUse" x1="350.59" y1="333.38" x2="345.93" y2="332.30"><stop offset="0.00" stop-color="#7bc88b"/><stop offset="0.50" stop-color="#7bc98b"/><stop offset="1.00" stop-color="#7cca8c"/></linearGradient><clipPath id="cF4"><polygon points="178.5,244.0 231.7,237.3 442.8,208.0 494.3,213.6 482.6,244.5 274.0,303.0"/></clipPath><linearGradient id="q101" gradientUnits="userSpaceOnUse" x1="279.50" y1="230.20" x2="279.50" y2="230.20"><stop offset="0.00" stop-color="#0e1612"/><stop offset="0.50" stop-color="#2e4d37"/><stop offset="1.00" stop-color="#4e8460"/></linearGradient><linearGradient id="q102" gradientUnits="userSpaceOnUse" x1="340.04" y1="222.26" x2="339.96" y2="221.67"><stop offset="0.00" stop-color="#416f50"/><stop offset="0.50" stop-color="#487a58"/><stop offset="1.00" stop-color="#4e8460"/></linearGradient><linearGradient id="q103" gradientUnits="userSpaceOnUse" x1="481.48" y1="197.58" x2="452.81" y2="220.51"><stop offset="0.00" stop-color="#233929"/><stop offset="0.50" stop-color="#375e43"/><stop offset="1.00" stop-color="#4e8460"/></linearGradient><linearGradient id="q104" gradientUnits="userSpaceOnUse" x1="219.87" y1="272.46" x2="242.72" y2="264.76"><stop offset="0.00" stop-color="#2b4834"/><stop offset="0.50" stop-color="#406d4e"/><stop offset="1.00" stop-color="#589267"/></linearGradient><linearGradient id="q105" gradientUnits="userSpaceOnUse" x1="194.89" y1="290.69" x2="261.48" y2="267.32"><stop offset="0.00" stop-color="#0e1612"/><stop offset="0.50" stop-color="#3d684a"/><stop offset="1.00" stop-color="#6fb87f"/></linearGradient><linearGradient id="q106" gradientUnits="userSpaceOnUse" x1="208.10" y1="236.80" x2="221.24" y2="290.80"><stop offset="0.00" stop-color="#0e1612"/><stop offset="0.50" stop-color="#32543c"/><stop offset="1.00" stop-color="#589267"/></linearGradient><linearGradient id="q107" gradientUnits="userSpaceOnUse" x1="240.00" y1="227.47" x2="360.00" y2="227.47"><stop offset="0.00" stop-color="#416f50"/><stop offset="0.50" stop-color="#447454"/><stop offset="1.00" stop-color="#487a58"/></linearGradient><linearGradient id="q108" gradientUnits="userSpaceOnUse" x1="280.66" y1="242.18" x2="279.54" y2="229.28"><stop offset="0.00" stop-color="#375e43"/><stop offset="0.50" stop-color="#3d694b"/><stop offset="1.00" stop-color="#447454"/></linearGradient><linearGradient id="q109" gradientUnits="userSpaceOnUse" x1="490.57" y1="207.73" x2="457.45" y2="228.74"><stop offset="0.00" stop-color="#233929"/><stop offset="0.50" stop-color="#375e43"/><stop offset="1.00" stop-color="#4e8460"/></linearGradient><linearGradient id="q110" gradientUnits="userSpaceOnUse" x1="399.54" y1="222.62" x2="400.65" y2="209.38"><stop offset="0.00" stop-color="#487a58"/><stop offset="0.50" stop-color="#4b7f5c"/><stop offset="1.00" stop-color="#4e8460"/></linearGradient><linearGradient id="q111" gradientUnits="userSpaceOnUse" x1="428.46" y1="219.89" x2="427.17" y2="210.06"><stop offset="0.00" stop-color="#497c5a"/><stop offset="0.50" stop-color="#4c805d"/><stop offset="1.00" stop-color="#4e8460"/></linearGradient><linearGradient id="q112" gradientUnits="userSpaceOnUse" x1="424.10" y1="226.13" x2="444.35" y2="209.93"><stop offset="0.00" stop-color="#497c5a"/><stop offset="0.50" stop-color="#4c805d"/><stop offset="1.00" stop-color="#4e8460"/></linearGradient><linearGradient id="q113" gradientUnits="userSpaceOnUse" x1="428.60" y1="235.09" x2="431.19" y2="214.62"><stop offset="0.00" stop-color="#416f50"/><stop offset="0.50" stop-color="#487a58"/><stop offset="1.00" stop-color="#4e8460"/></linearGradient><linearGradient id="q114" gradientUnits="userSpaceOnUse" x1="409.41" y1="237.18" x2="417.04" y2="262.58"><stop offset="0.00" stop-color="#416f50"/><stop offset="0.50" stop-color="#548e65"/><stop offset="1.00" stop-color="#66aa76"/></linearGradient><linearGradient id="q115" gradientUnits="userSpaceOnUse" x1="199.32" y1="247.43" x2="198.04" y2="255.21"><stop offset="0.00" stop-color="#0e1612"/><stop offset="0.50" stop-color="#1d2f22"/><stop offset="1.00" stop-color="#2b4834"/></linearGradient><linearGradient id="q116" gradientUnits="userSpaceOnUse" x1="204.48" y1="244.89" x2="227.25" y2="251.85"><stop offset="0.00" stop-color="#17251b"/><stop offset="0.50" stop-color="#294330"/><stop offset="1.00" stop-color="#396045"/></linearGradient><linearGradient id="q117" gradientUnits="userSpaceOnUse" x1="215.09" y1="249.63" x2="217.78" y2="232.18"><stop offset="0.00" stop-color="#0e1612"/><stop offset="0.50" stop-color="#294330"/><stop offset="1.00" stop-color="#416f50"/></linearGradient><linearGradient id="q118" gradientUnits="userSpaceOnUse" x1="198.01" y1="255.06" x2="213.82" y2="227.17"><stop offset="0.00" stop-color="#0e1612"/><stop offset="0.50" stop-color="#243c2b"/><stop offset="1.00" stop-color="#396045"/></linearGradient><linearGradient id="q119" gradientUnits="userSpaceOnUse" x1="273.36" y1="260.08" x2="249.98" y2="228.27"><stop offset="0.00" stop-color="#375e43"/><stop offset="0.50" stop-color="#3c6649"/><stop offset="1.00" stop-color="#416f50"/></linearGradient><linearGradient id="q120" gradientUnits="userSpaceOnUse" x1="229.74" y1="260.65" x2="254.38" y2="275.27"><stop offset="0.00" stop-color="#3b6549"/><stop offset="0.50" stop-color="#497c5a"/><stop offset="1.00" stop-color="#589267"/></linearGradient><linearGradient id="q121" gradientUnits="userSpaceOnUse" x1="232.62" y1="241.78" x2="240.92" y2="240.07"><stop offset="0.00" stop-color="#396045"/><stop offset="0.50" stop-color="#3d684a"/><stop offset="1.00" stop-color="#416f50"/></linearGradient><linearGradient id="q122" gradientUnits="userSpaceOnUse" x1="219.01" y1="251.87" x2="232.67" y2="260.80"><stop offset="0.00" stop-color="#2b4834"/><stop offset="0.50" stop-color="#355940"/><stop offset="1.00" stop-color="#3e6a4c"/></linearGradient><linearGradient id="q123" gradientUnits="userSpaceOnUse" x1="214.33" y1="249.45" x2="239.83" y2="247.44"><stop offset="0.00" stop-color="#2b4834"/><stop offset="0.50" stop-color="#355940"/><stop offset="1.00" stop-color="#3e6a4c"/></linearGradient><linearGradient id="q124" gradientUnits="userSpaceOnUse" x1="339.71" y1="238.85" x2="340.58" y2="259.81"><stop offset="0.00" stop-color="#375e43"/><stop offset="0.50" stop-color="#477857"/><stop offset="1.00" stop-color="#589267"/></linearGradient><linearGradient id="q125" gradientUnits="userSpaceOnUse" x1="320.18" y1="239.66" x2="319.64" y2="226.68"><stop offset="0.00" stop-color="#375e43"/><stop offset="0.50" stop-color="#3d694b"/><stop offset="1.00" stop-color="#447454"/></linearGradient><linearGradient id="q126" gradientUnits="userSpaceOnUse" x1="372.77" y1="237.58" x2="373.78" y2="268.55"><stop offset="0.00" stop-color="#375e43"/><stop offset="0.50" stop-color="#4f8561"/><stop offset="1.00" stop-color="#66aa76"/></linearGradient><linearGradient id="q127" gradientUnits="userSpaceOnUse" x1="390.20" y1="231.66" x2="397.87" y2="268.15"><stop offset="0.00" stop-color="#375e43"/><stop offset="0.50" stop-color="#4f8561"/><stop offset="1.00" stop-color="#66aa76"/></linearGradient><linearGradient id="q128" gradientUnits="userSpaceOnUse" x1="334.68" y1="286.05" x2="334.66" y2="285.96"><stop offset="0.00" stop-color="#66aa76"/><stop offset="0.50" stop-color="#6bb27a"/><stop offset="1.00" stop-color="#6fb87f"/></linearGradient><linearGradient id="q129" gradientUnits="userSpaceOnUse" x1="360.99" y1="258.82" x2="365.09" y2="280.72"><stop offset="0.00" stop-color="#589267"/><stop offset="0.50" stop-color="#62a371"/><stop offset="1.00" stop-color="#6cb47c"/></linearGradient><linearGradient id="q130" gradientUnits="userSpaceOnUse" x1="494.47" y1="229.96" x2="482.45" y2="230.08"><stop offset="0.00" stop-color="#233929"/><stop offset="0.50" stop-color="#3d684a"/><stop offset="1.00" stop-color="#5b976a"/></linearGradient><linearGradient id="q131" gradientUnits="userSpaceOnUse" x1="482.02" y1="214.94" x2="483.89" y2="232.12"><stop offset="0.00" stop-color="#233929"/><stop offset="0.50" stop-color="#375e43"/><stop offset="1.00" stop-color="#4e8460"/></linearGradient><linearGradient id="q132" gradientUnits="userSpaceOnUse" x1="474.49" y1="226.55" x2="483.91" y2="243.79"><stop offset="0.00" stop-color="#416f50"/><stop offset="0.50" stop-color="#4e8460"/><stop offset="1.00" stop-color="#5b976a"/></linearGradient><linearGradient id="q133" gradientUnits="userSpaceOnUse" x1="467.36" y1="224.42" x2="455.09" y2="231.50"><stop offset="0.00" stop-color="#416f50"/><stop offset="0.50" stop-color="#497c5a"/><stop offset="1.00" stop-color="#518962"/></linearGradient><linearGradient id="q134" gradientUnits="userSpaceOnUse" x1="419.86" y1="232.49" x2="458.98" y2="228.90"><stop offset="0.00" stop-color="#416f50"/><stop offset="0.50" stop-color="#497c5a"/><stop offset="1.00" stop-color="#518962"/></linearGradient><linearGradient id="q135" gradientUnits="userSpaceOnUse" x1="432.13" y1="232.32" x2="434.17" y2="247.04"><stop offset="0.00" stop-color="#416f50"/><stop offset="0.50" stop-color="#4c805d"/><stop offset="1.00" stop-color="#569066"/></linearGradient><linearGradient id="q136" gradientUnits="userSpaceOnUse" x1="470.22" y1="228.98" x2="471.42" y2="245.32"><stop offset="0.00" stop-color="#416f50"/><stop offset="0.50" stop-color="#4e8460"/><stop offset="1.00" stop-color="#5b976a"/></linearGradient><linearGradient id="q137" gradientUnits="userSpaceOnUse" x1="446.22" y1="242.10" x2="448.98" y2="260.23"><stop offset="0.00" stop-color="#518962"/><stop offset="0.50" stop-color="#5c9a6b"/><stop offset="1.00" stop-color="#66aa76"/></linearGradient><linearGradient id="q138" gradientUnits="userSpaceOnUse" x1="425.72" y1="243.87" x2="428.06" y2="264.53"><stop offset="0.00" stop-color="#518962"/><stop offset="0.50" stop-color="#5c9a6b"/><stop offset="1.00" stop-color="#66aa76"/></linearGradient><linearGradient id="q139" gradientUnits="userSpaceOnUse" x1="340.35" y1="228.68" x2="339.70" y2="221.03"><stop offset="0.00" stop-color="#406d4e"/><stop offset="0.50" stop-color="#447353"/><stop offset="1.00" stop-color="#487a58"/></linearGradient><linearGradient id="q140" gradientUnits="userSpaceOnUse" x1="340.91" y1="239.91" x2="339.27" y2="223.57"><stop offset="0.00" stop-color="#375e43"/><stop offset="0.50" stop-color="#3d694b"/><stop offset="1.00" stop-color="#447454"/></linearGradient><linearGradient id="q141" gradientUnits="userSpaceOnUse" x1="378.86" y1="240.78" x2="380.70" y2="228.21"><stop offset="0.00" stop-color="#375e43"/><stop offset="0.50" stop-color="#3c6649"/><stop offset="1.00" stop-color="#416f50"/></linearGradient><linearGradient id="q142" gradientUnits="userSpaceOnUse" x1="379.70" y1="228.06" x2="380.19" y2="218.85"><stop offset="0.00" stop-color="#406d4e"/><stop offset="0.50" stop-color="#447454"/><stop offset="1.00" stop-color="#497c5a"/></linearGradient><linearGradient id="q143" gradientUnits="userSpaceOnUse" x1="399.05" y1="233.25" x2="401.49" y2="218.04"><stop offset="0.00" stop-color="#406d4e"/><stop offset="0.50" stop-color="#447454"/><stop offset="1.00" stop-color="#497c5a"/></linearGradient><linearGradient id="q144" gradientUnits="userSpaceOnUse" x1="318.22" y1="238.60" x2="321.01" y2="265.41"><stop offset="0.00" stop-color="#375e43"/><stop offset="0.50" stop-color="#487b59"/><stop offset="1.00" stop-color="#5b976a"/></linearGradient><linearGradient id="q145" gradientUnits="userSpaceOnUse" x1="329.20" y1="261.52" x2="331.30" y2="287.19"><stop offset="0.00" stop-color="#589267"/><stop offset="0.50" stop-color="#62a371"/><stop offset="1.00" stop-color="#6cb47c"/></linearGradient><linearGradient id="q146" gradientUnits="userSpaceOnUse" x1="297.69" y1="268.07" x2="303.58" y2="296.98"><stop offset="0.00" stop-color="#5b976a"/><stop offset="0.50" stop-color="#65a874"/><stop offset="1.00" stop-color="#6fb87f"/></linearGradient><linearGradient id="q147" gradientUnits="userSpaceOnUse" x1="270.72" y1="275.53" x2="280.53" y2="300.43"><stop offset="0.00" stop-color="#589267"/><stop offset="0.50" stop-color="#64a672"/><stop offset="1.00" stop-color="#6fb87f"/></linearGradient><linearGradient id="q148" gradientUnits="userSpaceOnUse" x1="279.41" y1="241.60" x2="280.86" y2="268.62"><stop offset="0.00" stop-color="#375e43"/><stop offset="0.50" stop-color="#487b59"/><stop offset="1.00" stop-color="#5b976a"/></linearGradient><linearGradient id="q149" gradientUnits="userSpaceOnUse" x1="253.45" y1="243.99" x2="268.73" y2="280.64"><stop offset="0.00" stop-color="#3e6a4c"/><stop offset="0.50" stop-color="#4c815e"/><stop offset="1.00" stop-color="#5b976a"/></linearGradient><clipPath id="cF5"><polygon points="231.7,237.3 236.0,233.0 241.5,228.4 247.0,224.2 252.5,221.0 258.0,218.2 263.5,215.4 269.0,212.6 274.5,209.0 280.0,205.6 285.5,202.8 291.0,200.5 296.5,198.8 302.0,197.5 312.0,194.8 332.0,190.8 352.0,187.9 372.0,184.8 394.7,180.9 418.1,180.9 424.0,182.5 428.0,185.5 431.0,188.5 451.0,194.5 494.3,213.6 442.8,208.0"/></clipPath><linearGradient id="q150" gradientUnits="userSpaceOnUse" x1="352.42" y1="230.98" x2="351.68" y2="216.87"><stop offset="0.00" stop-color="#396045"/><stop offset="0.50" stop-color="#4d835f"/><stop offset="1.00" stop-color="#62a371"/></linearGradient><linearGradient id="q151" gradientUnits="userSpaceOnUse" x1="414.08" y1="177.16" x2="385.89" y2="205.98"><stop offset="0.00" stop-color="#599568"/><stop offset="0.50" stop-color="#5e9c6c"/><stop offset="1.00" stop-color="#62a371"/></linearGradient><linearGradient id="q152" gradientUnits="userSpaceOnUse" x1="406.30" y1="225.33" x2="404.00" y2="208.13"><stop offset="0.00" stop-color="#569066"/><stop offset="0.50" stop-color="#5c9a6b"/><stop offset="1.00" stop-color="#62a371"/></linearGradient><linearGradient id="q153" gradientUnits="userSpaceOnUse" x1="246.40" y1="221.58" x2="264.06" y2="234.27"><stop offset="0.00" stop-color="#497c5a"/><stop offset="0.50" stop-color="#528a63"/><stop offset="1.00" stop-color="#5b976a"/></linearGradient><linearGradient id="q154" gradientUnits="userSpaceOnUse" x1="277.80" y1="232.42" x2="276.87" y2="223.63"><stop offset="0.00" stop-color="#396045"/><stop offset="0.50" stop-color="#4d835f"/><stop offset="1.00" stop-color="#62a371"/></linearGradient><linearGradient id="q155" gradientUnits="userSpaceOnUse" x1="233.53" y1="240.12" x2="265.65" y2="219.29"><stop offset="0.00" stop-color="#396045"/><stop offset="0.50" stop-color="#497c5a"/><stop offset="1.00" stop-color="#5b976a"/></linearGradient><linearGradient id="q156" gradientUnits="userSpaceOnUse" x1="247.83" y1="235.49" x2="250.68" y2="221.94"><stop offset="0.00" stop-color="#3d694b"/><stop offset="0.50" stop-color="#4c815d"/><stop offset="1.00" stop-color="#5b976a"/></linearGradient><linearGradient id="q157" gradientUnits="userSpaceOnUse" x1="427.52" y1="183.35" x2="389.40" y2="209.11"><stop offset="0.00" stop-color="#589267"/><stop offset="0.50" stop-color="#5d9b6b"/><stop offset="1.00" stop-color="#62a371"/></linearGradient><linearGradient id="q158" gradientUnits="userSpaceOnUse" x1="323.16" y1="192.30" x2="327.58" y2="218.41"><stop offset="0.00" stop-color="#5f9d6d"/><stop offset="0.50" stop-color="#60a06f"/><stop offset="1.00" stop-color="#62a371"/></linearGradient><linearGradient id="q159" gradientUnits="userSpaceOnUse" x1="339.63" y1="185.93" x2="335.47" y2="218.69"><stop offset="0.00" stop-color="#5e9c6c"/><stop offset="0.50" stop-color="#60a06e"/><stop offset="1.00" stop-color="#62a371"/></linearGradient><linearGradient id="q160" gradientUnits="userSpaceOnUse" x1="391.25" y1="179.34" x2="379.52" y2="205.26"><stop offset="0.00" stop-color="#5d9b6b"/><stop offset="0.50" stop-color="#609f6e"/><stop offset="1.00" stop-color="#62a371"/></linearGradient><linearGradient id="q161" gradientUnits="userSpaceOnUse" x1="372.87" y1="184.19" x2="372.94" y2="184.66"><stop offset="0.00" stop-color="#5d9b6b"/><stop offset="0.50" stop-color="#5e9d6c"/><stop offset="1.00" stop-color="#5f9f6e"/></linearGradient><linearGradient id="q162" gradientUnits="userSpaceOnUse" x1="345.68" y1="190.03" x2="353.16" y2="208.74"><stop offset="0.00" stop-color="#5e9c6c"/><stop offset="0.50" stop-color="#60a06e"/><stop offset="1.00" stop-color="#62a371"/></linearGradient><linearGradient id="q163" gradientUnits="userSpaceOnUse" x1="381.47" y1="188.59" x2="375.26" y2="204.11"><stop offset="0.00" stop-color="#5f9f6e"/><stop offset="0.50" stop-color="#61a16f"/><stop offset="1.00" stop-color="#62a371"/></linearGradient><linearGradient id="q164" gradientUnits="userSpaceOnUse" x1="359.94" y1="183.03" x2="370.47" y2="201.74"><stop offset="0.00" stop-color="#5e9c6c"/><stop offset="0.50" stop-color="#60a06e"/><stop offset="1.00" stop-color="#62a371"/></linearGradient><linearGradient id="q165" gradientUnits="userSpaceOnUse" x1="318.48" y1="197.50" x2="310.61" y2="216.42"><stop offset="0.00" stop-color="#5f9d6d"/><stop offset="0.50" stop-color="#61a170"/><stop offset="1.00" stop-color="#64a672"/></linearGradient><linearGradient id="q166" gradientUnits="userSpaceOnUse" x1="298.91" y1="229.03" x2="300.69" y2="212.07"><stop offset="0.00" stop-color="#5b976a"/><stop offset="0.50" stop-color="#5f9e6e"/><stop offset="1.00" stop-color="#64a672"/></linearGradient><linearGradient id="q167" gradientUnits="userSpaceOnUse" x1="276.14" y1="211.49" x2="296.56" y2="220.13"><stop offset="0.00" stop-color="#5b976a"/><stop offset="0.50" stop-color="#5f9e6e"/><stop offset="1.00" stop-color="#64a672"/></linearGradient><linearGradient id="q168" gradientUnits="userSpaceOnUse" x1="423.02" y1="184.32" x2="423.50" y2="182.31"><stop offset="0.00" stop-color="#589368"/><stop offset="0.50" stop-color="#599468"/><stop offset="1.00" stop-color="#599568"/></linearGradient><linearGradient id="q169" gradientUnits="userSpaceOnUse" x1="426.17" y1="189.10" x2="425.06" y2="180.13"><stop offset="0.00" stop-color="#589267"/><stop offset="0.50" stop-color="#589468"/><stop offset="1.00" stop-color="#599568"/></linearGradient><linearGradient id="q170" gradientUnits="userSpaceOnUse" x1="424.34" y1="187.14" x2="418.47" y2="215.83"><stop offset="0.00" stop-color="#589267"/><stop offset="0.50" stop-color="#5d9b6b"/><stop offset="1.00" stop-color="#62a371"/></linearGradient><linearGradient id="q171" gradientUnits="userSpaceOnUse" x1="469.22" y1="214.52" x2="468.94" y2="207.04"><stop offset="0.00" stop-color="#569066"/><stop offset="0.50" stop-color="#5a9669"/><stop offset="1.00" stop-color="#5e9c6c"/></linearGradient><linearGradient id="q172" gradientUnits="userSpaceOnUse" x1="446.01" y1="225.42" x2="439.28" y2="197.94"><stop offset="0.00" stop-color="#569066"/><stop offset="0.50" stop-color="#5c9a6b"/><stop offset="1.00" stop-color="#62a371"/></linearGradient><linearGradient id="q173" gradientUnits="userSpaceOnUse" x1="454.28" y1="194.38" x2="454.76" y2="207.56"><stop offset="0.00" stop-color="#5b976a"/><stop offset="0.50" stop-color="#5c9a6b"/><stop offset="1.00" stop-color="#5e9c6c"/></linearGradient><linearGradient id="q174" gradientUnits="userSpaceOnUse" x1="438.79" y1="186.43" x2="444.41" y2="207.57"><stop offset="0.00" stop-color="#589267"/><stop offset="0.50" stop-color="#5b976a"/><stop offset="1.00" stop-color="#5e9c6c"/></linearGradient><linearGradient id="q175" gradientUnits="userSpaceOnUse" x1="435.56" y1="191.30" x2="438.36" y2="186.74"><stop offset="0.00" stop-color="#589267"/><stop offset="0.50" stop-color="#599568"/><stop offset="1.00" stop-color="#5b976a"/></linearGradient><linearGradient id="q176" gradientUnits="userSpaceOnUse" x1="433.85" y1="188.46" x2="434.91" y2="186.37"><stop offset="0.00" stop-color="#589368"/><stop offset="0.50" stop-color="#599569"/><stop offset="1.00" stop-color="#5b976a"/></linearGradient><linearGradient id="q177" gradientUnits="userSpaceOnUse" x1="456.45" y1="196.82" x2="456.42" y2="196.90"><stop offset="0.00" stop-color="#569066"/><stop offset="0.50" stop-color="#589468"/><stop offset="1.00" stop-color="#5b976a"/></linearGradient><linearGradient id="q178" gradientUnits="userSpaceOnUse" x1="473.13" y1="202.44" x2="470.57" y2="207.30"><stop offset="0.00" stop-color="#569066"/><stop offset="0.50" stop-color="#5a9669"/><stop offset="1.00" stop-color="#5e9c6c"/></linearGradient><linearGradient id="q179" gradientUnits="userSpaceOnUse" x1="257.88" y1="218.98" x2="270.76" y2="220.90"><stop offset="0.00" stop-color="#568f66"/><stop offset="0.50" stop-color="#589368"/><stop offset="1.00" stop-color="#5b976a"/></linearGradient><linearGradient id="q180" gradientUnits="userSpaceOnUse" x1="265.03" y1="214.36" x2="272.01" y2="224.64"><stop offset="0.00" stop-color="#589267"/><stop offset="0.50" stop-color="#599568"/><stop offset="1.00" stop-color="#5b976a"/></linearGradient><linearGradient id="q181" gradientUnits="userSpaceOnUse" x1="303.03" y1="197.11" x2="307.58" y2="209.12"><stop offset="0.00" stop-color="#5e9d6c"/><stop offset="0.50" stop-color="#61a16f"/><stop offset="1.00" stop-color="#64a672"/></linearGradient><linearGradient id="q182" gradientUnits="userSpaceOnUse" x1="303.38" y1="196.64" x2="303.62" y2="197.43"><stop offset="0.00" stop-color="#5e9c6c"/><stop offset="0.50" stop-color="#5e9d6c"/><stop offset="1.00" stop-color="#5f9d6d"/></linearGradient><linearGradient id="q183" gradientUnits="userSpaceOnUse" x1="297.60" y1="198.33" x2="302.92" y2="210.75"><stop offset="0.00" stop-color="#5e9c6c"/><stop offset="0.50" stop-color="#61a16f"/><stop offset="1.00" stop-color="#64a672"/></linearGradient><linearGradient id="q184" gradientUnits="userSpaceOnUse" x1="280.15" y1="204.92" x2="300.56" y2="209.52"><stop offset="0.00" stop-color="#5b986a"/><stop offset="0.50" stop-color="#609f6e"/><stop offset="1.00" stop-color="#64a672"/></linearGradient><linearGradient id="q185" gradientUnits="userSpaceOnUse" x1="247.09" y1="223.01" x2="270.09" y2="224.77"><stop offset="0.00" stop-color="#4b7f5c"/><stop offset="0.50" stop-color="#538b64"/><stop offset="1.00" stop-color="#5b976a"/></linearGradient><linearGradient id="q186" gradientUnits="userSpaceOnUse" x1="255.90" y1="225.19" x2="264.01" y2="218.62"><stop offset="0.00" stop-color="#4e8560"/><stop offset="0.50" stop-color="#558e65"/><stop offset="1.00" stop-color="#5b976a"/></linearGradient><linearGradient id="q187" gradientUnits="userSpaceOnUse" x1="263.32" y1="214.63" x2="263.67" y2="215.22"><stop offset="0.00" stop-color="#4e8560"/><stop offset="0.50" stop-color="#558e65"/><stop offset="1.00" stop-color="#5b986a"/></linearGradient><linearGradient id="q188" gradientUnits="userSpaceOnUse" x1="269.16" y1="212.66" x2="268.74" y2="211.79"><stop offset="0.00" stop-color="#589267"/><stop offset="0.50" stop-color="#589468"/><stop offset="1.00" stop-color="#599568"/></linearGradient><linearGradient id="q189" gradientUnits="userSpaceOnUse" x1="271.22" y1="211.73" x2="270.50" y2="210.25"><stop offset="0.00" stop-color="#568f66"/><stop offset="0.50" stop-color="#589468"/><stop offset="1.00" stop-color="#5b986a"/></linearGradient><linearGradient id="q190" gradientUnits="userSpaceOnUse" x1="265.07" y1="213.78" x2="265.58" y2="214.59"><stop offset="0.00" stop-color="#568f66"/><stop offset="0.50" stop-color="#579267"/><stop offset="1.00" stop-color="#599568"/></linearGradient><linearGradient id="q191" gradientUnits="userSpaceOnUse" x1="272.88" y1="212.67" x2="276.22" y2="214.15"><stop offset="0.00" stop-color="#599568"/><stop offset="0.50" stop-color="#5a9669"/><stop offset="1.00" stop-color="#5b986a"/></linearGradient><linearGradient id="q192" gradientUnits="userSpaceOnUse" x1="268.12" y1="214.25" x2="274.46" y2="217.62"><stop offset="0.00" stop-color="#589367"/><stop offset="0.50" stop-color="#599568"/><stop offset="1.00" stop-color="#5b976a"/></linearGradient><linearGradient id="q193" gradientUnits="userSpaceOnUse" x1="294.79" y1="199.19" x2="297.82" y2="212.50"><stop offset="0.00" stop-color="#5e9c6c"/><stop offset="0.50" stop-color="#61a16f"/><stop offset="1.00" stop-color="#64a672"/></linearGradient><linearGradient id="q194" gradientUnits="userSpaceOnUse" x1="288.13" y1="200.49" x2="298.98" y2="212.89"><stop offset="0.00" stop-color="#5d9b6c"/><stop offset="0.50" stop-color="#61a06f"/><stop offset="1.00" stop-color="#64a672"/></linearGradient><clipPath id="cF6"><polygon points="494.3,213.6 676.0,235.5 628.8,271.0 482.6,244.5"/></clipPath><linearGradient id="q195" gradientUnits="userSpaceOnUse" x1="654.14" y1="229.77" x2="642.40" y2="274.56"><stop offset="0.00" stop-color="#111b15"/><stop offset="0.50" stop-color="#31523b"/><stop offset="1.00" stop-color="#518962"/></linearGradient><linearGradient id="q196" gradientUnits="userSpaceOnUse" x1="617.36" y1="271.12" x2="558.66" y2="174.50"><stop offset="0.00" stop-color="#111b15"/><stop offset="0.50" stop-color="#203425"/><stop offset="1.00" stop-color="#2e4d37"/></linearGradient><linearGradient id="q197" gradientUnits="userSpaceOnUse" x1="600.32" y1="258.94" x2="598.69" y2="267.39"><stop offset="0.00" stop-color="#487a58"/><stop offset="0.50" stop-color="#4e8460"/><stop offset="1.00" stop-color="#548e65"/></linearGradient><linearGradient id="q198" gradientUnits="userSpaceOnUse" x1="593.26" y1="227.95" x2="587.18" y2="264.69"><stop offset="0.00" stop-color="#1d2f22"/><stop offset="0.50" stop-color="#375e43"/><stop offset="1.00" stop-color="#548e65"/></linearGradient><linearGradient id="q199" gradientUnits="userSpaceOnUse" x1="625.38" y1="247.07" x2="620.90" y2="269.41"><stop offset="0.00" stop-color="#31523b"/><stop offset="0.50" stop-color="#406d4e"/><stop offset="1.00" stop-color="#518962"/></linearGradient><linearGradient id="q200" gradientUnits="userSpaceOnUse" x1="615.55" y1="231.80" x2="610.47" y2="260.71"><stop offset="0.00" stop-color="#1d2f22"/><stop offset="0.50" stop-color="#32543c"/><stop offset="1.00" stop-color="#487a58"/></linearGradient><linearGradient id="q201" gradientUnits="userSpaceOnUse" x1="649.07" y1="223.85" x2="639.39" y2="246.22"><stop offset="0.00" stop-color="#111b15"/><stop offset="0.50" stop-color="#17251b"/><stop offset="1.00" stop-color="#1d2f22"/></linearGradient><linearGradient id="q202" gradientUnits="userSpaceOnUse" x1="659.45" y1="233.23" x2="656.83" y2="252.31"><stop offset="0.00" stop-color="#111b15"/><stop offset="0.50" stop-color="#223627"/><stop offset="1.00" stop-color="#31523b"/></linearGradient><linearGradient id="q203" gradientUnits="userSpaceOnUse" x1="634.56" y1="230.15" x2="631.04" y2="248.26"><stop offset="0.00" stop-color="#142018"/><stop offset="0.50" stop-color="#233929"/><stop offset="1.00" stop-color="#31523b"/></linearGradient><linearGradient id="q204" gradientUnits="userSpaceOnUse" x1="482.28" y1="225.92" x2="489.13" y2="241.66"><stop offset="0.00" stop-color="#396045"/><stop offset="0.50" stop-color="#437252"/><stop offset="1.00" stop-color="#4e8460"/></linearGradient><linearGradient id="q205" gradientUnits="userSpaceOnUse" x1="502.67" y1="214.65" x2="491.63" y2="225.64"><stop offset="0.00" stop-color="#294330"/><stop offset="0.50" stop-color="#31523b"/><stop offset="1.00" stop-color="#396045"/></linearGradient><linearGradient id="q206" gradientUnits="userSpaceOnUse" x1="505.06" y1="216.91" x2="486.20" y2="235.21"><stop offset="0.00" stop-color="#294330"/><stop offset="0.50" stop-color="#365c42"/><stop offset="1.00" stop-color="#447454"/></linearGradient><linearGradient id="q207" gradientUnits="userSpaceOnUse" x1="497.37" y1="235.51" x2="487.72" y2="248.35"><stop offset="0.00" stop-color="#3e6a4c"/><stop offset="0.50" stop-color="#467756"/><stop offset="1.00" stop-color="#4e8460"/></linearGradient><linearGradient id="q208" gradientUnits="userSpaceOnUse" x1="509.91" y1="221.94" x2="496.72" y2="242.04"><stop offset="0.00" stop-color="#294330"/><stop offset="0.50" stop-color="#365c42"/><stop offset="1.00" stop-color="#447454"/></linearGradient><linearGradient id="q209" gradientUnits="userSpaceOnUse" x1="521.37" y1="247.03" x2="520.31" y2="252.99"><stop offset="0.00" stop-color="#3e6a4c"/><stop offset="0.50" stop-color="#497c5a"/><stop offset="1.00" stop-color="#548e65"/></linearGradient><linearGradient id="q210" gradientUnits="userSpaceOnUse" x1="540.32" y1="247.06" x2="539.03" y2="258.28"><stop offset="0.00" stop-color="#3b6549"/><stop offset="0.50" stop-color="#487a58"/><stop offset="1.00" stop-color="#548e65"/></linearGradient><linearGradient id="q211" gradientUnits="userSpaceOnUse" x1="576.68" y1="253.68" x2="512.45" y2="194.05"><stop offset="0.00" stop-color="#1d2f22"/><stop offset="0.50" stop-color="#263e2d"/><stop offset="1.00" stop-color="#2e4d37"/></linearGradient><linearGradient id="q212" gradientUnits="userSpaceOnUse" x1="514.16" y1="225.73" x2="515.37" y2="216.29"><stop offset="0.00" stop-color="#263e2d"/><stop offset="0.50" stop-color="#2a4632"/><stop offset="1.00" stop-color="#2e4d37"/></linearGradient><linearGradient id="q213" gradientUnits="userSpaceOnUse" x1="570.98" y1="226.31" x2="567.66" y2="261.61"><stop offset="0.00" stop-color="#1d2f22"/><stop offset="0.50" stop-color="#375e43"/><stop offset="1.00" stop-color="#548e65"/></linearGradient><linearGradient id="q214" gradientUnits="userSpaceOnUse" x1="547.86" y1="228.14" x2="551.67" y2="263.73"><stop offset="0.00" stop-color="#263e2d"/><stop offset="0.50" stop-color="#3b6549"/><stop offset="1.00" stop-color="#548e65"/></linearGradient><linearGradient id="q215" gradientUnits="userSpaceOnUse" x1="522.79" y1="223.36" x2="515.07" y2="246.68"><stop offset="0.00" stop-color="#263e2d"/><stop offset="0.50" stop-color="#32543c"/><stop offset="1.00" stop-color="#3e6a4c"/></linearGradient><linearGradient id="q216" gradientUnits="userSpaceOnUse" x1="531.65" y1="227.84" x2="528.82" y2="247.68"><stop offset="0.00" stop-color="#263e2d"/><stop offset="0.50" stop-color="#32543c"/><stop offset="1.00" stop-color="#3e6a4c"/></linearGradient><clipPath id="cF7"><polygon points="482.6,244.5 628.8,271.0 593.6,335.7 560.6,312.3 540.0,300.0 514.3,275.8 485.0,258.5"/></clipPath><linearGradient id="q217" gradientUnits="userSpaceOnUse" x1="542.53" y1="251.17" x2="537.88" y2="271.41"><stop offset="0.00" stop-color="#61a16f"/><stop offset="0.50" stop-color="#65a874"/><stop offset="1.00" stop-color="#69af79"/></linearGradient><linearGradient id="q218" gradientUnits="userSpaceOnUse" x1="571.76" y1="262.21" x2="566.83" y2="294.26"><stop offset="0.00" stop-color="#61a16f"/><stop offset="0.50" stop-color="#6cb47c"/><stop offset="1.00" stop-color="#79c689"/></linearGradient><linearGradient id="q219" gradientUnits="userSpaceOnUse" x1="620.03" y1="297.08" x2="607.95" y2="293.02"><stop offset="0.00" stop-color="#61a16f"/><stop offset="0.50" stop-color="#72bd82"/><stop offset="1.00" stop-color="#88d89d"/></linearGradient><linearGradient id="q220" gradientUnits="userSpaceOnUse" x1="612.12" y1="265.99" x2="600.71" y2="304.01"><stop offset="0.00" stop-color="#61a16f"/><stop offset="0.50" stop-color="#6cb47c"/><stop offset="1.00" stop-color="#79c689"/></linearGradient><linearGradient id="q221" gradientUnits="userSpaceOnUse" x1="488.11" y1="242.67" x2="496.96" y2="269.33"><stop offset="0.00" stop-color="#64a672"/><stop offset="0.50" stop-color="#66aa76"/><stop offset="1.00" stop-color="#69af79"/></linearGradient><linearGradient id="q222" gradientUnits="userSpaceOnUse" x1="628.61" y1="309.14" x2="590.19" y2="315.69"><stop offset="0.00" stop-color="#66aa76"/><stop offset="0.50" stop-color="#76c186"/><stop offset="1.00" stop-color="#88d89d"/></linearGradient><linearGradient id="q223" gradientUnits="userSpaceOnUse" x1="605.94" y1="273.01" x2="587.05" y2="322.15"><stop offset="0.00" stop-color="#66aa76"/><stop offset="0.50" stop-color="#75c085"/><stop offset="1.00" stop-color="#86d69a"/></linearGradient><linearGradient id="q224" gradientUnits="userSpaceOnUse" x1="511.39" y1="263.18" x2="563.29" y2="303.05"><stop offset="0.00" stop-color="#69af79"/><stop offset="0.50" stop-color="#71bb81"/><stop offset="1.00" stop-color="#79c689"/></linearGradient><linearGradient id="q225" gradientUnits="userSpaceOnUse" x1="541.04" y1="275.28" x2="541.53" y2="299.97"><stop offset="0.00" stop-color="#6bb37b"/><stop offset="0.50" stop-color="#74be84"/><stop offset="1.00" stop-color="#7cca8c"/></linearGradient><linearGradient id="q226" gradientUnits="userSpaceOnUse" x1="497.95" y1="253.39" x2="507.81" y2="278.36"><stop offset="0.00" stop-color="#66aa76"/><stop offset="0.50" stop-color="#69af78"/><stop offset="1.00" stop-color="#6bb37b"/></linearGradient><linearGradient id="q227" gradientUnits="userSpaceOnUse" x1="515.75" y1="272.13" x2="509.40" y2="286.44"><stop offset="0.00" stop-color="#66aa76"/><stop offset="0.50" stop-color="#71bb81"/><stop offset="1.00" stop-color="#7cca8c"/></linearGradient><linearGradient id="q228" gradientUnits="userSpaceOnUse" x1="557.80" y1="293.10" x2="555.33" y2="311.37"><stop offset="0.00" stop-color="#79c689"/><stop offset="0.50" stop-color="#7cca8c"/><stop offset="1.00" stop-color="#80cf92"/></linearGradient><linearGradient id="q229" gradientUnits="userSpaceOnUse" x1="574.36" y1="294.67" x2="574.56" y2="324.83"><stop offset="0.00" stop-color="#79c689"/><stop offset="0.50" stop-color="#7fce90"/><stop offset="1.00" stop-color="#86d69a"/></linearGradient><linearGradient id="q230" gradientUnits="userSpaceOnUse" x1="565.22" y1="301.18" x2="563.67" y2="334.30"><stop offset="0.00" stop-color="#7cca8c"/><stop offset="0.50" stop-color="#82d194"/><stop offset="1.00" stop-color="#88d89d"/></linearGradient><linearGradient id="q231" gradientUnits="userSpaceOnUse" x1="571.20" y1="305.31" x2="590.46" y2="337.58"><stop offset="0.00" stop-color="#80cf92"/><stop offset="0.50" stop-color="#84d497"/><stop offset="1.00" stop-color="#88d89d"/></linearGradient><clipPath id="cF8"><polygon points="628.8,271.0 688.0,356.5 684.4,360.5 679.4,362.5 674.4,363.2 668.0,363.2 661.5,362.5 654.4,361.0 647.2,359.5 638.6,356.8 630.0,353.8 622.2,350.3 614.3,346.7 607.2,343.2 600.0,339.5 593.6,335.7"/></clipPath><linearGradient id="q232" gradientUnits="userSpaceOnUse" x1="642.25" y1="298.36" x2="588.28" y2="324.88"><stop offset="0.00" stop-color="#5e9c6c"/><stop offset="0.50" stop-color="#71bb81"/><stop offset="1.00" stop-color="#88d89d"/></linearGradient><linearGradient id="q233" gradientUnits="userSpaceOnUse" x1="672.24" y1="309.18" x2="639.98" y2="319.93"><stop offset="0.00" stop-color="#31523b"/><stop offset="0.50" stop-color="#4a7e5b"/><stop offset="1.00" stop-color="#65a874"/></linearGradient><linearGradient id="q234" gradientUnits="userSpaceOnUse" x1="681.21" y1="340.02" x2="653.04" y2="351.63"><stop offset="0.00" stop-color="#31523b"/><stop offset="0.50" stop-color="#4a7e5b"/><stop offset="1.00" stop-color="#65a874"/></linearGradient><linearGradient id="q235" gradientUnits="userSpaceOnUse" x1="661.69" y1="346.59" x2="651.57" y2="350.44"><stop offset="0.00" stop-color="#558e65"/><stop offset="0.50" stop-color="#5d9b6c"/><stop offset="1.00" stop-color="#65a874"/></linearGradient><linearGradient id="q236" gradientUnits="userSpaceOnUse" x1="679.88" y1="364.21" x2="673.75" y2="357.75"><stop offset="0.00" stop-color="#31523b"/><stop offset="0.50" stop-color="#416f50"/><stop offset="1.00" stop-color="#558e65"/></linearGradient><linearGradient id="q237" gradientUnits="userSpaceOnUse" x1="645.00" y1="344.97" x2="637.00" y2="346.18"><stop offset="0.00" stop-color="#63a471"/><stop offset="0.50" stop-color="#6ab17a"/><stop offset="1.00" stop-color="#73be83"/></linearGradient><linearGradient id="q238" gradientUnits="userSpaceOnUse" x1="639.63" y1="337.05" x2="607.35" y2="336.35"><stop offset="0.00" stop-color="#65a874"/><stop offset="0.50" stop-color="#6fb87f"/><stop offset="1.00" stop-color="#7ac78a"/></linearGradient><linearGradient id="q239" gradientUnits="userSpaceOnUse" x1="624.86" y1="320.52" x2="625.88" y2="350.17"><stop offset="0.00" stop-color="#65a874"/><stop offset="0.50" stop-color="#6eb77e"/><stop offset="1.00" stop-color="#78c488"/></linearGradient><linearGradient id="q240" gradientUnits="userSpaceOnUse" x1="684.78" y1="355.82" x2="683.21" y2="363.30"><stop offset="0.00" stop-color="#31523b"/><stop offset="0.50" stop-color="#375e43"/><stop offset="1.00" stop-color="#3e6a4c"/></linearGradient><linearGradient id="q241" gradientUnits="userSpaceOnUse" x1="681.72" y1="355.22" x2="679.87" y2="364.31"><stop offset="0.00" stop-color="#31523b"/><stop offset="0.50" stop-color="#396145"/><stop offset="1.00" stop-color="#427050"/></linearGradient><linearGradient id="q242" gradientUnits="userSpaceOnUse" x1="646.51" y1="354.89" x2="660.96" y2="336.22"><stop offset="0.00" stop-color="#5d9a6b"/><stop offset="0.50" stop-color="#61a16f"/><stop offset="1.00" stop-color="#65a874"/></linearGradient><linearGradient id="q243" gradientUnits="userSpaceOnUse" x1="652.76" y1="346.22" x2="643.02" y2="347.30"><stop offset="0.00" stop-color="#5d9a6b"/><stop offset="0.50" stop-color="#61a16f"/><stop offset="1.00" stop-color="#65a874"/></linearGradient><linearGradient id="q244" gradientUnits="userSpaceOnUse" x1="654.37" y1="360.99" x2="654.36" y2="361.01"><stop offset="0.00" stop-color="#5d9a6b"/><stop offset="0.50" stop-color="#609f6e"/><stop offset="1.00" stop-color="#63a471"/></linearGradient><linearGradient id="q245" gradientUnits="userSpaceOnUse" x1="640.35" y1="320.96" x2="594.43" y2="337.93"><stop offset="0.00" stop-color="#65a874"/><stop offset="0.50" stop-color="#75c085"/><stop offset="1.00" stop-color="#88d89d"/></linearGradient><linearGradient id="q246" gradientUnits="userSpaceOnUse" x1="631.43" y1="340.72" x2="604.16" y2="329.45"><stop offset="0.00" stop-color="#65a874"/><stop offset="0.50" stop-color="#73be83"/><stop offset="1.00" stop-color="#84d497"/></linearGradient><linearGradient id="q247" gradientUnits="userSpaceOnUse" x1="646.26" y1="340.45" x2="627.66" y2="346.15"><stop offset="0.00" stop-color="#65a874"/><stop offset="0.50" stop-color="#70ba80"/><stop offset="1.00" stop-color="#7cca8c"/></linearGradient><linearGradient id="q248" gradientUnits="userSpaceOnUse" x1="626.12" y1="323.60" x2="633.71" y2="352.84"><stop offset="0.00" stop-color="#65a874"/><stop offset="0.50" stop-color="#70ba80"/><stop offset="1.00" stop-color="#7cca8c"/></linearGradient><clipPath id="cF9"><polygon points="628.8,271.0 676.0,235.5 706.0,275.0 706.0,290.0 701.0,314.5 699.0,340.7 692.0,352.0 688.0,356.5"/></clipPath><linearGradient id="q249" gradientUnits="userSpaceOnUse" x1="686.86" y1="260.63" x2="694.43" y2="256.02"><stop offset="0.00" stop-color="#0f1913"/><stop offset="0.50" stop-color="#152119"/><stop offset="1.00" stop-color="#1a2a1e"/></linearGradient><linearGradient id="q250" gradientUnits="userSpaceOnUse" x1="685.12" y1="253.13" x2="671.90" y2="257.98"><stop offset="0.00" stop-color="#0f1913"/><stop offset="0.50" stop-color="#1d2d21"/><stop offset="1.00" stop-color="#294330"/></linearGradient><linearGradient id="q251" gradientUnits="userSpaceOnUse" x1="648.80" y1="292.69" x2="629.98" y2="270.02"><stop offset="0.00" stop-color="#487a58"/><stop offset="0.50" stop-color="#508661"/><stop offset="1.00" stop-color="#589267"/></linearGradient><linearGradient id="q252" gradientUnits="userSpaceOnUse" x1="656.21" y1="231.59" x2="647.67" y2="274.73"><stop offset="0.00" stop-color="#142018"/><stop offset="0.50" stop-color="#355940"/><stop offset="1.00" stop-color="#589267"/></linearGradient><linearGradient id="q253" gradientUnits="userSpaceOnUse" x1="682.37" y1="249.64" x2="645.46" y2="266.27"><stop offset="0.00" stop-color="#142018"/><stop offset="0.50" stop-color="#32543c"/><stop offset="1.00" stop-color="#518962"/></linearGradient><linearGradient id="q254" gradientUnits="userSpaceOnUse" x1="683.39" y1="324.32" x2="660.10" y2="325.22"><stop offset="0.00" stop-color="#294330"/><stop offset="0.50" stop-color="#2f5039"/><stop offset="1.00" stop-color="#365c42"/></linearGradient><linearGradient id="q255" gradientUnits="userSpaceOnUse" x1="666.32" y1="315.12" x2="642.75" y2="318.60"><stop offset="0.00" stop-color="#31523b"/><stop offset="0.50" stop-color="#3b6549"/><stop offset="1.00" stop-color="#487a58"/></linearGradient><linearGradient id="q256" gradientUnits="userSpaceOnUse" x1="673.77" y1="272.89" x2="647.50" y2="270.84"><stop offset="0.00" stop-color="#294330"/><stop offset="0.50" stop-color="#3b6549"/><stop offset="1.00" stop-color="#518962"/></linearGradient><linearGradient id="q257" gradientUnits="userSpaceOnUse" x1="662.33" y1="298.99" x2="641.71" y2="293.54"><stop offset="0.00" stop-color="#365c42"/><stop offset="0.50" stop-color="#3e6a4c"/><stop offset="1.00" stop-color="#487a58"/></linearGradient><linearGradient id="q258" gradientUnits="userSpaceOnUse" x1="656.32" y1="287.24" x2="642.67" y2="280.29"><stop offset="0.00" stop-color="#3b6549"/><stop offset="0.50" stop-color="#467756"/><stop offset="1.00" stop-color="#518962"/></linearGradient><linearGradient id="q259" gradientUnits="userSpaceOnUse" x1="698.00" y1="327.98" x2="689.03" y2="319.05"><stop offset="0.00" stop-color="#1d2f22"/><stop offset="0.50" stop-color="#233929"/><stop offset="1.00" stop-color="#294330"/></linearGradient><linearGradient id="q260" gradientUnits="userSpaceOnUse" x1="695.11" y1="329.80" x2="705.17" y2="326.21"><stop offset="0.00" stop-color="#1d2f22"/><stop offset="0.50" stop-color="#213526"/><stop offset="1.00" stop-color="#243b2a"/></linearGradient><linearGradient id="q261" gradientUnits="userSpaceOnUse" x1="694.56" y1="334.36" x2="672.36" y2="329.41"><stop offset="0.00" stop-color="#1d2f22"/><stop offset="0.50" stop-color="#27412e"/><stop offset="1.00" stop-color="#31523b"/></linearGradient><linearGradient id="q262" gradientUnits="userSpaceOnUse" x1="690.31" y1="347.09" x2="674.35" y2="352.60"><stop offset="0.00" stop-color="#294431"/><stop offset="0.50" stop-color="#2d4b36"/><stop offset="1.00" stop-color="#31523b"/></linearGradient><linearGradient id="q263" gradientUnits="userSpaceOnUse" x1="696.99" y1="332.80" x2="675.82" y2="348.07"><stop offset="0.00" stop-color="#1d2f22"/><stop offset="0.50" stop-color="#27412e"/><stop offset="1.00" stop-color="#31523b"/></linearGradient><linearGradient id="q264" gradientUnits="userSpaceOnUse" x1="698.73" y1="339.94" x2="688.94" y2="343.43"><stop offset="0.00" stop-color="#1d2f22"/><stop offset="0.50" stop-color="#233929"/><stop offset="1.00" stop-color="#294431"/></linearGradient><linearGradient id="q265" gradientUnits="userSpaceOnUse" x1="702.97" y1="315.22" x2="700.94" y2="314.90"><stop offset="0.00" stop-color="#1d2f22"/><stop offset="0.50" stop-color="#213526"/><stop offset="1.00" stop-color="#243b2a"/></linearGradient><linearGradient id="q266" gradientUnits="userSpaceOnUse" x1="688.90" y1="276.85" x2="673.93" y2="276.23"><stop offset="0.00" stop-color="#0f1913"/><stop offset="0.50" stop-color="#1d2d21"/><stop offset="1.00" stop-color="#294330"/></linearGradient><linearGradient id="q267" gradientUnits="userSpaceOnUse" x1="681.07" y1="282.18" x2="659.95" y2="280.91"><stop offset="0.00" stop-color="#1d2f22"/><stop offset="0.50" stop-color="#2d4b35"/><stop offset="1.00" stop-color="#3b6549"/></linearGradient><linearGradient id="q268" gradientUnits="userSpaceOnUse" x1="680.20" y1="298.74" x2="657.60" y2="295.15"><stop offset="0.00" stop-color="#1d2f22"/><stop offset="0.50" stop-color="#2d4b35"/><stop offset="1.00" stop-color="#3b6549"/></linearGradient><linearGradient id="q269" gradientUnits="userSpaceOnUse" x1="683.55" y1="305.79" x2="664.34" y2="317.58"><stop offset="0.00" stop-color="#1d2f22"/><stop offset="0.50" stop-color="#2a4632"/><stop offset="1.00" stop-color="#365c42"/></linearGradient><linearGradient id="q270" gradientUnits="userSpaceOnUse" x1="688.19" y1="300.04" x2="688.08" y2="324.72"><stop offset="0.00" stop-color="#1d2f22"/><stop offset="0.50" stop-color="#233929"/><stop offset="1.00" stop-color="#294330"/></linearGradient><linearGradient id="q271" gradientUnits="userSpaceOnUse" x1="680.27" y1="272.19" x2="696.76" y2="292.56"><stop offset="0.00" stop-color="#0f1913"/><stop offset="0.50" stop-color="#18261c"/><stop offset="1.00" stop-color="#203425"/></linearGradient><linearGradient id="q272" gradientUnits="userSpaceOnUse" x1="691.73" y1="263.48" x2="704.93" y2="286.80"><stop offset="0.00" stop-color="#0f1913"/><stop offset="0.50" stop-color="#18261c"/><stop offset="1.00" stop-color="#203425"/></linearGradient><linearGradient id="q273" gradientUnits="userSpaceOnUse" x1="706.91" y1="275.24" x2="703.25" y2="289.28"><stop offset="0.00" stop-color="#1a2a1e"/><stop offset="0.50" stop-color="#1d2f22"/><stop offset="1.00" stop-color="#203425"/></linearGradient><linearGradient id="q274" gradientUnits="userSpaceOnUse" x1="704.90" y1="289.71" x2="698.60" y2="313.87"><stop offset="0.00" stop-color="#203425"/><stop offset="0.50" stop-color="#223728"/><stop offset="1.00" stop-color="#243b2a"/></linearGradient><linearGradient id="q275" gradientUnits="userSpaceOnUse" x1="684.24" y1="294.05" x2="705.02" y2="308.86"><stop offset="0.00" stop-color="#1d2f22"/><stop offset="0.50" stop-color="#213526"/><stop offset="1.00" stop-color="#243b2a"/></linearGradient></defs>
<g clip-path="url(#cF1)">
<polygon points="178.5,244.0 150.1,283.2 148.8,285.0 148.8,299.7 155.6,308.5 162.9,308.9 175.8,314.8 181.3,330.0 186.5,336.0 187.0,432.0 274.0,303.0" fill="#3a6347"/>
<polygon points="187.0,432.0 244.5,343.5 274.0,303.0" fill="url(#q1)" stroke="url(#q1)" stroke-width="0.6"/>
<polygon points="224.0,364.0 244.5,343.5 187.0,432.0" fill="url(#q2)" stroke="url(#q2)" stroke-width="0.6"/>
<polygon points="224.0,364.0 187.0,400.0 194.7,349.0" fill="url(#q3)" stroke="url(#q3)" stroke-width="0.6"/>
<polygon points="149.0,300.0 187.0,400.0 187.0,432.0" fill="url(#q4)" stroke="url(#q4)" stroke-width="0.6"/>
<polygon points="187.0,400.0 149.0,300.0 155.6,308.5" fill="url(#q5)" stroke="url(#q5)" stroke-width="0.6"/>
<polygon points="202.8,263.9 178.5,244.0 274.0,303.0" fill="url(#q6)" stroke="url(#q6)" stroke-width="0.6"/>
<polygon points="231.7,283.1 202.8,263.9 274.0,303.0" fill="url(#q7)" stroke="url(#q7)" stroke-width="0.6"/>
<polygon points="193.0,292.8 202.8,263.9 231.7,283.1" fill="url(#q8)" stroke="url(#q8)" stroke-width="0.6"/>
<polygon points="260.5,298.5 231.7,283.1 274.0,303.0" fill="url(#q9)" stroke="url(#q9)" stroke-width="0.6"/>
<polygon points="194.7,408.0 224.0,364.0 187.0,432.0" fill="url(#q10)" stroke="url(#q10)" stroke-width="0.6"/>
<polygon points="187.0,400.0 194.7,408.0 187.0,432.0" fill="url(#q11)" stroke="url(#q11)" stroke-width="0.6"/>
<polygon points="194.7,408.0 187.0,400.0 224.0,364.0" fill="url(#q12)" stroke="url(#q12)" stroke-width="0.6"/>
<polygon points="187.0,400.0 181.0,330.0 194.7,349.0" fill="url(#q13)" stroke="url(#q13)" stroke-width="0.6"/>
<polygon points="181.0,330.0 187.0,400.0 155.6,308.5" fill="url(#q14)" stroke="url(#q14)" stroke-width="0.6"/>
<polygon points="181.0,330.0 175.8,314.8 183.5,327.4" fill="#31523b" stroke="#31523b" stroke-width="0.6"/>
<polygon points="205.0,320.0 175.8,314.8 193.0,292.8" fill="url(#q15)" stroke="url(#q15)" stroke-width="0.6"/>
<polygon points="175.8,314.8 205.0,320.0 183.5,327.4" fill="url(#q16)" stroke="url(#q16)" stroke-width="0.6"/>
<polygon points="260.5,298.5 251.0,312.0 231.7,283.1" fill="url(#q17)" stroke="url(#q17)" stroke-width="0.6"/>
<polygon points="244.5,343.5 251.0,312.0 274.0,303.0" fill="url(#q18)" stroke="url(#q18)" stroke-width="0.6"/>
<polygon points="251.0,312.0 260.5,298.5 274.0,303.0" fill="url(#q19)" stroke="url(#q19)" stroke-width="0.6"/>
<polygon points="164.0,273.5 150.0,283.0 178.5,244.0" fill="url(#q20)" stroke="url(#q20)" stroke-width="0.6"/>
<polygon points="193.0,292.8 177.7,263.9 202.8,263.9" fill="url(#q21)" stroke="url(#q21)" stroke-width="0.6"/>
<polygon points="202.8,263.9 177.7,263.9 178.5,244.0" fill="url(#q22)" stroke="url(#q22)" stroke-width="0.6"/>
<polygon points="177.7,263.9 164.0,273.5 178.5,244.0" fill="url(#q23)" stroke="url(#q23)" stroke-width="0.6"/>
<polygon points="181.0,330.0 187.0,336.0 194.7,349.0" fill="url(#q24)" stroke="url(#q24)" stroke-width="0.6"/>
<polygon points="187.0,336.0 181.0,330.0 183.5,327.4" fill="url(#q25)" stroke="url(#q25)" stroke-width="0.6"/>
<polygon points="187.0,336.0 205.0,320.0 194.7,349.0" fill="url(#q26)" stroke="url(#q26)" stroke-width="0.6"/>
<polygon points="205.0,320.0 187.0,336.0 183.5,327.4" fill="url(#q27)" stroke="url(#q27)" stroke-width="0.6"/>
<polygon points="175.8,314.8 177.7,292.8 193.0,292.8" fill="url(#q28)" stroke="url(#q28)" stroke-width="0.6"/>
<polygon points="177.7,292.8 150.0,283.0 164.0,273.5" fill="url(#q29)" stroke="url(#q29)" stroke-width="0.6"/>
<polygon points="177.7,292.8 177.7,263.9 193.0,292.8" fill="url(#q30)" stroke="url(#q30)" stroke-width="0.6"/>
<polygon points="177.7,263.9 177.7,292.8 164.0,273.5" fill="url(#q31)" stroke="url(#q31)" stroke-width="0.6"/>
<polygon points="177.7,292.8 149.0,300.0 148.8,285.0" fill="url(#q32)" stroke="url(#q32)" stroke-width="0.6"/>
<polygon points="150.0,283.0 177.7,292.8 148.8,285.0" fill="url(#q33)" stroke="url(#q33)" stroke-width="0.6"/>
<polygon points="222.0,335.0 251.0,312.0 244.5,343.5" fill="url(#q34)" stroke="url(#q34)" stroke-width="0.6"/>
<polygon points="222.0,335.0 244.5,343.5 224.0,364.0" fill="url(#q35)" stroke="url(#q35)" stroke-width="0.6"/>
<polygon points="222.0,335.0 224.0,364.0 194.7,349.0" fill="url(#q36)" stroke="url(#q36)" stroke-width="0.6"/>
<polygon points="205.0,320.0 222.0,335.0 194.7,349.0" fill="url(#q37)" stroke="url(#q37)" stroke-width="0.6"/>
<polygon points="163.0,309.0 177.7,292.8 175.8,314.8" fill="url(#q38)" stroke="url(#q38)" stroke-width="0.6"/>
<polygon points="163.0,309.0 181.0,330.0 155.6,308.5" fill="url(#q39)" stroke="url(#q39)" stroke-width="0.6"/>
<polygon points="163.0,309.0 175.8,314.8 181.0,330.0" fill="url(#q40)" stroke="url(#q40)" stroke-width="0.6"/>
<polygon points="149.0,300.0 163.0,309.0 155.6,308.5" fill="url(#q41)" stroke="url(#q41)" stroke-width="0.6"/>
<polygon points="177.7,292.8 163.0,309.0 149.0,300.0" fill="url(#q42)" stroke="url(#q42)" stroke-width="0.6"/>
<polygon points="222.0,312.0 222.0,335.0 205.0,320.0" fill="url(#q43)" stroke="url(#q43)" stroke-width="0.6"/>
<polygon points="222.0,335.0 222.0,312.0 251.0,312.0" fill="url(#q44)" stroke="url(#q44)" stroke-width="0.6"/>
<polygon points="251.0,312.0 222.0,312.0 231.7,283.1" fill="url(#q45)" stroke="url(#q45)" stroke-width="0.6"/>
<polygon points="222.0,312.0 193.0,292.8 231.7,283.1" fill="url(#q46)" stroke="url(#q46)" stroke-width="0.6"/>
<polygon points="222.0,312.0 205.0,320.0 193.0,292.8" fill="url(#q47)" stroke="url(#q47)" stroke-width="0.6"/>
</g>
<g clip-path="url(#cF2)">
<polygon points="274.0,303.0 187.0,432.0 188.3,444.5 191.0,453.5 195.4,461.0 202.0,467.0 210.8,472.5 220.7,475.5 232.8,475.0 245.0,471.5 258.0,467.5 270.7,461.0 282.9,452.3 294.2,443.6 304.7,432.3 312.5,421.0 320.4,410.5 325.0,401.0" fill="#73bd83"/>
<polygon points="260.0,400.0 274.0,303.0 325.0,401.0" fill="url(#q48)" stroke="url(#q48)" stroke-width="0.6"/>
<polygon points="274.0,303.0 220.0,420.0 187.0,432.0" fill="url(#q49)" stroke="url(#q49)" stroke-width="0.6"/>
<polygon points="260.0,400.0 220.0,420.0 274.0,303.0" fill="url(#q50)" stroke="url(#q50)" stroke-width="0.6"/>
<polygon points="220.0,420.0 188.3,444.5 187.0,432.0" fill="url(#q51)" stroke="url(#q51)" stroke-width="0.6"/>
<polygon points="320.4,410.5 260.0,400.0 325.0,401.0" fill="url(#q52)" stroke="url(#q52)" stroke-width="0.6"/>
<polygon points="310.0,425.0 291.5,437.0 260.0,400.0" fill="url(#q53)" stroke="url(#q53)" stroke-width="0.6"/>
<polygon points="202.0,467.0 203.5,461.0 210.8,472.5" fill="url(#q54)" stroke="url(#q54)" stroke-width="0.6"/>
<polygon points="203.5,461.0 220.7,475.5 210.8,472.5" fill="url(#q55)" stroke="url(#q55)" stroke-width="0.6"/>
<polygon points="203.5,461.0 202.0,467.0 195.4,461.0" fill="url(#q56)" stroke="url(#q56)" stroke-width="0.6"/>
<polygon points="220.7,475.5 203.5,461.0 232.0,475.0" fill="url(#q57)" stroke="url(#q57)" stroke-width="0.6"/>
<polygon points="191.0,453.0 203.5,461.0 195.4,461.0" fill="url(#q58)" stroke="url(#q58)" stroke-width="0.6"/>
<polygon points="203.5,461.0 188.3,444.5 220.0,420.0" fill="url(#q59)" stroke="url(#q59)" stroke-width="0.6"/>
<polygon points="203.5,461.0 191.0,453.0 188.3,444.5" fill="url(#q60)" stroke="url(#q60)" stroke-width="0.6"/>
<polygon points="253.0,458.0 270.7,461.0 258.0,467.5" fill="url(#q61)" stroke="url(#q61)" stroke-width="0.6"/>
<polygon points="245.0,471.5 253.0,458.0 258.0,467.5" fill="url(#q62)" stroke="url(#q62)" stroke-width="0.6"/>
<polygon points="253.0,458.0 220.0,420.0 260.0,400.0" fill="url(#q63)" stroke="url(#q63)" stroke-width="0.6"/>
<polygon points="253.0,458.0 245.0,471.5 232.0,475.0" fill="url(#q64)" stroke="url(#q64)" stroke-width="0.6"/>
<polygon points="270.7,461.0 253.0,458.0 282.9,452.3" fill="url(#q65)" stroke="url(#q65)" stroke-width="0.6"/>
<polygon points="203.5,461.0 253.0,458.0 232.0,475.0" fill="url(#q66)" stroke="url(#q66)" stroke-width="0.6"/>
<polygon points="253.0,458.0 203.5,461.0 220.0,420.0" fill="url(#q67)" stroke="url(#q67)" stroke-width="0.6"/>
<polygon points="291.5,437.0 253.0,458.0 260.0,400.0" fill="url(#q68)" stroke="url(#q68)" stroke-width="0.6"/>
<polygon points="253.0,458.0 291.5,437.0 282.9,452.3" fill="url(#q69)" stroke="url(#q69)" stroke-width="0.6"/>
<polygon points="312.5,421.0 310.0,425.0 260.0,400.0" fill="url(#q70)" stroke="url(#q70)" stroke-width="0.6"/>
<polygon points="320.4,410.5 312.5,421.0 260.0,400.0" fill="url(#q71)" stroke="url(#q71)" stroke-width="0.6"/>
<polygon points="312.5,421.0 320.4,410.5 310.0,425.0" fill="url(#q72)" stroke="url(#q72)" stroke-width="0.6"/>
<polygon points="291.5,437.0 294.2,443.6 282.9,452.3" fill="url(#q73)" stroke="url(#q73)" stroke-width="0.6"/>
<polygon points="304.7,432.3 291.5,437.0 310.0,425.0" fill="url(#q74)" stroke="url(#q74)" stroke-width="0.6"/>
<polygon points="304.7,432.3 294.2,443.6 291.5,437.0" fill="url(#q75)" stroke="url(#q75)" stroke-width="0.6"/>
</g>
<g clip-path="url(#cF3)">
<polygon points="274.0,303.0 325.0,401.0 331.7,380.0 335.0,370.7 344.2,340.0 346.4,332.0 352.3,326.0 364.0,315.8 384.6,298.2 405.2,285.7 420.0,282.0 485.0,258.5 482.6,244.5" fill="#76c286"/>
<polygon points="325.0,401.0 420.0,282.0 485.0,258.5" fill="url(#q76)" stroke="url(#q76)" stroke-width="0.6"/>
<polygon points="420.0,282.0 482.6,244.5 485.0,258.5" fill="url(#q77)" stroke="url(#q77)" stroke-width="0.6"/>
<polygon points="405.2,285.7 420.0,282.0 384.6,298.2" fill="url(#q78)" stroke="url(#q78)" stroke-width="0.6"/>
<polygon points="420.0,282.0 405.2,285.7 482.6,244.5" fill="url(#q79)" stroke="url(#q79)" stroke-width="0.6"/>
<polygon points="420.0,282.0 364.0,315.8 384.6,298.2" fill="url(#q80)" stroke="url(#q80)" stroke-width="0.6"/>
<polygon points="300.0,320.0 300.0,380.0 274.0,303.0" fill="url(#q81)" stroke="url(#q81)" stroke-width="0.6"/>
<polygon points="482.6,244.5 359.7,294.7 274.0,303.0" fill="url(#q82)" stroke="url(#q82)" stroke-width="0.6"/>
<polygon points="405.2,285.7 359.7,294.7 482.6,244.5" fill="url(#q83)" stroke="url(#q83)" stroke-width="0.6"/>
<polygon points="359.7,294.7 405.2,285.7 384.6,298.2" fill="url(#q84)" stroke="url(#q84)" stroke-width="0.6"/>
<polygon points="359.7,294.7 300.0,320.0 274.0,303.0" fill="url(#q85)" stroke="url(#q85)" stroke-width="0.6"/>
<polygon points="364.0,315.8 359.7,294.7 384.6,298.2" fill="url(#q86)" stroke="url(#q86)" stroke-width="0.6"/>
<polygon points="335.0,370.0 364.0,315.8 420.0,282.0" fill="url(#q87)" stroke="url(#q87)" stroke-width="0.6"/>
<polygon points="364.0,315.8 335.0,370.0 344.2,340.0" fill="url(#q88)" stroke="url(#q88)" stroke-width="0.6"/>
<polygon points="300.0,320.0 335.0,370.0 300.0,380.0" fill="url(#q89)" stroke="url(#q89)" stroke-width="0.6"/>
<polygon points="335.0,370.0 300.0,320.0 344.2,340.0" fill="url(#q90)" stroke="url(#q90)" stroke-width="0.6"/>
<polygon points="300.0,320.0 346.0,332.0 344.2,340.0" fill="url(#q91)" stroke="url(#q91)" stroke-width="0.6"/>
<polygon points="331.7,380.0 420.0,282.0 325.0,401.0" fill="url(#q92)" stroke="url(#q92)" stroke-width="0.6"/>
<polygon points="331.7,380.0 335.0,370.0 420.0,282.0" fill="url(#q93)" stroke="url(#q93)" stroke-width="0.6"/>
<polygon points="300.0,380.0 331.7,380.0 325.0,401.0" fill="url(#q94)" stroke="url(#q94)" stroke-width="0.6"/>
<polygon points="335.0,370.0 331.7,380.0 300.0,380.0" fill="url(#q95)" stroke="url(#q95)" stroke-width="0.6"/>
<polygon points="359.7,294.7 352.3,326.0 300.0,320.0" fill="url(#q96)" stroke="url(#q96)" stroke-width="0.6"/>
<polygon points="352.3,326.0 346.0,332.0 300.0,320.0" fill="url(#q97)" stroke="url(#q97)" stroke-width="0.6"/>
<polygon points="352.3,326.0 359.7,294.7 364.0,315.8" fill="url(#q98)" stroke="url(#q98)" stroke-width="0.6"/>
<polygon points="352.3,326.0 364.0,315.8 344.2,340.0" fill="url(#q99)" stroke="url(#q99)" stroke-width="0.6"/>
<polygon points="346.0,332.0 352.3,326.0 344.2,340.0" fill="url(#q100)" stroke="url(#q100)" stroke-width="0.6"/>
</g>
<g clip-path="url(#cF4)">
<polygon points="178.5,244.0 231.7,237.3 442.8,208.0 494.3,213.6 482.6,244.5 274.0,303.0" fill="#457655"/>
<polygon points="420.0,211.0 240.0,235.6 178.5,244.0" fill="url(#q101)" stroke="url(#q101)" stroke-width="0.6"/>
<polygon points="240.0,235.6 420.0,211.0 360.0,219.3" fill="url(#q102)" stroke="url(#q102)" stroke-width="0.6"/>
<polygon points="450.0,217.0 442.8,208.0 494.3,213.6" fill="url(#q103)" stroke="url(#q103)" stroke-width="0.6"/>
<polygon points="249.2,284.0 215.0,258.0 227.4,264.6" fill="url(#q104)" stroke="url(#q104)" stroke-width="0.6"/>
<polygon points="249.2,284.0 274.0,303.0 178.5,244.0" fill="url(#q105)" stroke="url(#q105)" stroke-width="0.6"/>
<polygon points="215.0,258.0 249.2,284.0 178.5,244.0" fill="url(#q106)" stroke="url(#q106)" stroke-width="0.6"/>
<polygon points="300.0,227.5 240.0,235.6 360.0,219.3" fill="url(#q107)" stroke="url(#q107)" stroke-width="0.6"/>
<polygon points="300.0,227.5 300.0,240.5 240.0,235.6" fill="url(#q108)" stroke="url(#q108)" stroke-width="0.6"/>
<polygon points="470.0,229.0 450.0,217.0 494.3,213.6" fill="url(#q109)" stroke="url(#q109)" stroke-width="0.6"/>
<polygon points="420.0,211.0 420.0,221.0 360.0,219.3" fill="url(#q110)" stroke="url(#q110)" stroke-width="0.6"/>
<polygon points="442.8,208.0 420.0,221.0 420.0,211.0" fill="url(#q111)" stroke="url(#q111)" stroke-width="0.6"/>
<polygon points="420.0,221.0 442.8,208.0 450.0,217.0" fill="url(#q112)" stroke="url(#q112)" stroke-width="0.6"/>
<polygon points="420.0,234.0 420.0,221.0 450.0,217.0" fill="url(#q113)" stroke="url(#q113)" stroke-width="0.6"/>
<polygon points="420.0,234.0 420.0,249.0 400.0,267.7" fill="url(#q114)" stroke="url(#q114)" stroke-width="0.6"/>
<polygon points="202.8,250.4 215.0,258.0 178.5,244.0" fill="url(#q115)" stroke="url(#q115)" stroke-width="0.6"/>
<polygon points="202.8,250.4 231.7,237.3 215.0,258.0" fill="url(#q116)" stroke="url(#q116)" stroke-width="0.6"/>
<polygon points="240.0,235.6 231.7,237.3 178.5,244.0" fill="url(#q117)" stroke="url(#q117)" stroke-width="0.6"/>
<polygon points="231.7,237.3 202.8,250.4 178.5,244.0" fill="url(#q118)" stroke="url(#q118)" stroke-width="0.6"/>
<polygon points="300.0,240.5 240.0,249.6 240.0,235.6" fill="url(#q119)" stroke="url(#q119)" stroke-width="0.6"/>
<polygon points="240.0,249.6 249.2,284.0 227.4,264.6" fill="url(#q120)" stroke="url(#q120)" stroke-width="0.6"/>
<polygon points="240.0,249.6 231.7,237.3 240.0,235.6" fill="url(#q121)" stroke="url(#q121)" stroke-width="0.6"/>
<polygon points="215.0,258.0 240.0,249.6 227.4,264.6" fill="url(#q122)" stroke="url(#q122)" stroke-width="0.6"/>
<polygon points="231.7,237.3 240.0,249.6 215.0,258.0" fill="url(#q123)" stroke="url(#q123)" stroke-width="0.6"/>
<polygon points="360.0,238.0 360.0,259.0 300.0,240.5" fill="url(#q124)" stroke="url(#q124)" stroke-width="0.6"/>
<polygon points="300.0,227.5 360.0,238.0 300.0,240.5" fill="url(#q125)" stroke="url(#q125)" stroke-width="0.6"/>
<polygon points="360.0,259.0 360.0,238.0 400.0,267.7" fill="url(#q126)" stroke="url(#q126)" stroke-width="0.6"/>
<polygon points="360.0,238.0 420.0,234.0 400.0,267.7" fill="url(#q127)" stroke="url(#q127)" stroke-width="0.6"/>
<polygon points="330.0,287.3 400.0,267.7 274.0,303.0" fill="url(#q128)" stroke="url(#q128)" stroke-width="0.6"/>
<polygon points="330.0,287.3 360.0,259.0 400.0,267.7" fill="url(#q129)" stroke="url(#q129)" stroke-width="0.6"/>
<polygon points="482.6,244.5 485.0,232.0 494.3,213.6" fill="url(#q130)" stroke="url(#q130)" stroke-width="0.6"/>
<polygon points="485.0,232.0 470.0,229.0 494.3,213.6" fill="url(#q131)" stroke="url(#q131)" stroke-width="0.6"/>
<polygon points="470.0,229.0 485.0,232.0 482.6,244.5" fill="url(#q132)" stroke="url(#q132)" stroke-width="0.6"/>
<polygon points="470.0,229.0 460.0,240.0 450.0,217.0" fill="url(#q133)" stroke="url(#q133)" stroke-width="0.6"/>
<polygon points="460.0,240.0 420.0,234.0 450.0,217.0" fill="url(#q134)" stroke="url(#q134)" stroke-width="0.6"/>
<polygon points="460.0,240.0 420.0,249.0 420.0,234.0" fill="url(#q135)" stroke="url(#q135)" stroke-width="0.6"/>
<polygon points="460.0,240.0 470.0,229.0 482.6,244.5" fill="url(#q136)" stroke="url(#q136)" stroke-width="0.6"/>
<polygon points="400.0,267.7 460.0,240.0 482.6,244.5" fill="url(#q137)" stroke="url(#q137)" stroke-width="0.6"/>
<polygon points="420.0,249.0 460.0,240.0 400.0,267.7" fill="url(#q138)" stroke="url(#q138)" stroke-width="0.6"/>
<polygon points="360.0,227.0 300.0,227.5 360.0,219.3" fill="url(#q139)" stroke="url(#q139)" stroke-width="0.6"/>
<polygon points="360.0,227.0 360.0,238.0 300.0,227.5" fill="url(#q140)" stroke="url(#q140)" stroke-width="0.6"/>
<polygon points="360.0,238.0 360.0,227.0 420.0,234.0" fill="url(#q141)" stroke="url(#q141)" stroke-width="0.6"/>
<polygon points="420.0,221.0 360.0,227.0 360.0,219.3" fill="url(#q142)" stroke="url(#q142)" stroke-width="0.6"/>
<polygon points="360.0,227.0 420.0,221.0 420.0,234.0" fill="url(#q143)" stroke="url(#q143)" stroke-width="0.6"/>
<polygon points="360.0,259.0 300.0,267.6 300.0,240.5" fill="url(#q144)" stroke="url(#q144)" stroke-width="0.6"/>
<polygon points="330.0,287.3 300.0,267.6 360.0,259.0" fill="url(#q145)" stroke="url(#q145)" stroke-width="0.6"/>
<polygon points="300.0,267.6 330.0,287.3 274.0,303.0" fill="url(#q146)" stroke="url(#q146)" stroke-width="0.6"/>
<polygon points="249.2,284.0 300.0,267.6 274.0,303.0" fill="url(#q147)" stroke="url(#q147)" stroke-width="0.6"/>
<polygon points="300.0,267.6 240.0,249.6 300.0,240.5" fill="url(#q148)" stroke="url(#q148)" stroke-width="0.6"/>
<polygon points="240.0,249.6 300.0,267.6 249.2,284.0" fill="url(#q149)" stroke="url(#q149)" stroke-width="0.6"/>
</g>
<g clip-path="url(#cF5)">
<polygon points="231.7,237.3 236.0,233.0 241.5,228.4 247.0,224.2 252.5,221.0 258.0,218.2 263.5,215.4 269.0,212.6 274.5,209.0 280.0,205.6 285.5,202.8 291.0,200.5 296.5,198.8 302.0,197.5 312.0,194.8 332.0,190.8 352.0,187.9 372.0,184.8 394.7,180.9 418.1,180.9 424.0,182.5 428.0,185.5 431.0,188.5 451.0,194.5 494.3,213.6 442.8,208.0" fill="#599468"/>
<polygon points="330.0,218.0 494.3,213.6 231.7,237.3" fill="url(#q150)" stroke="url(#q150)" stroke-width="0.6"/>
<polygon points="418.0,181.0 390.0,210.0 394.7,180.9" fill="url(#q151)" stroke="url(#q151)" stroke-width="0.6"/>
<polygon points="330.0,218.0 390.0,210.0 494.3,213.6" fill="url(#q152)" stroke="url(#q152)" stroke-width="0.6"/>
<polygon points="270.0,226.0 241.5,228.4 247.0,224.2" fill="url(#q153)" stroke="url(#q153)" stroke-width="0.6"/>
<polygon points="270.0,226.0 330.0,218.0 231.7,237.3" fill="url(#q154)" stroke="url(#q154)" stroke-width="0.6"/>
<polygon points="236.0,233.0 270.0,226.0 231.7,237.3" fill="url(#q155)" stroke="url(#q155)" stroke-width="0.6"/>
<polygon points="241.5,228.4 270.0,226.0 236.0,233.0" fill="url(#q156)" stroke="url(#q156)" stroke-width="0.6"/>
<polygon points="431.0,188.5 390.0,210.0 418.0,181.0" fill="url(#q157)" stroke="url(#q157)" stroke-width="0.6"/>
<polygon points="312.0,194.8 332.0,190.8 330.0,218.0" fill="url(#q158)" stroke="url(#q158)" stroke-width="0.6"/>
<polygon points="332.0,190.8 352.0,187.5 330.0,218.0" fill="url(#q159)" stroke="url(#q159)" stroke-width="0.6"/>
<polygon points="390.0,210.0 372.0,184.8 394.7,180.9" fill="url(#q160)" stroke="url(#q160)" stroke-width="0.6"/>
<polygon points="372.0,184.8 352.0,187.5 394.7,180.9" fill="url(#q161)" stroke="url(#q161)" stroke-width="0.6"/>
<polygon points="370.0,202.0 390.0,210.0 330.0,218.0" fill="#62a371" stroke="#62a371" stroke-width="0.6"/>
<polygon points="352.0,187.5 370.0,202.0 330.0,218.0" fill="url(#q162)" stroke="url(#q162)" stroke-width="0.6"/>
<polygon points="370.0,202.0 372.0,184.8 390.0,210.0" fill="url(#q163)" stroke="url(#q163)" stroke-width="0.6"/>
<polygon points="372.0,184.8 370.0,202.0 352.0,187.5" fill="url(#q164)" stroke="url(#q164)" stroke-width="0.6"/>
<polygon points="300.0,212.0 312.0,194.8 330.0,218.0" fill="url(#q165)" stroke="url(#q165)" stroke-width="0.6"/>
<polygon points="270.0,226.0 300.0,212.0 330.0,218.0" fill="url(#q166)" stroke="url(#q166)" stroke-width="0.6"/>
<polygon points="280.0,205.6 300.0,212.0 270.0,226.0" fill="url(#q167)" stroke="url(#q167)" stroke-width="0.6"/>
<polygon points="428.0,185.5 418.0,181.0 424.0,182.5" fill="url(#q168)" stroke="url(#q168)" stroke-width="0.6"/>
<polygon points="428.0,185.5 431.0,188.5 418.0,181.0" fill="url(#q169)" stroke="url(#q169)" stroke-width="0.6"/>
<polygon points="431.0,188.5 442.8,208.0 390.0,210.0" fill="url(#q170)" stroke="url(#q170)" stroke-width="0.6"/>
<polygon points="442.8,208.0 470.0,207.0 494.3,213.6" fill="url(#q171)" stroke="url(#q171)" stroke-width="0.6"/>
<polygon points="390.0,210.0 442.8,208.0 494.3,213.6" fill="url(#q172)" stroke="url(#q172)" stroke-width="0.6"/>
<polygon points="442.8,208.0 451.0,194.5 470.0,207.0" fill="url(#q173)" stroke="url(#q173)" stroke-width="0.6"/>
<polygon points="451.0,194.5 442.8,208.0 431.0,188.5" fill="url(#q174)" stroke="url(#q174)" stroke-width="0.6"/>
<polygon points="428.0,185.5 451.0,194.5 431.0,188.5" fill="url(#q175)" stroke="url(#q175)" stroke-width="0.6"/>
<polygon points="451.0,194.5 428.0,185.5 424.0,182.5" fill="url(#q176)" stroke="url(#q176)" stroke-width="0.6"/>
<polygon points="451.0,194.5 424.0,182.5 494.3,213.6" fill="url(#q177)" stroke="url(#q177)" stroke-width="0.6"/>
<polygon points="470.0,207.0 451.0,194.5 494.3,213.6" fill="url(#q178)" stroke="url(#q178)" stroke-width="0.6"/>
<polygon points="258.0,218.2 263.5,215.4 270.0,226.0" fill="url(#q179)" stroke="url(#q179)" stroke-width="0.6"/>
<polygon points="263.5,215.4 269.0,212.6 270.0,226.0" fill="url(#q180)" stroke="url(#q180)" stroke-width="0.6"/>
<polygon points="300.0,212.0 302.0,197.5 312.0,194.8" fill="url(#q181)" stroke="url(#q181)" stroke-width="0.6"/>
<polygon points="302.0,197.5 296.5,198.8 312.0,194.8" fill="url(#q182)" stroke="url(#q182)" stroke-width="0.6"/>
<polygon points="296.5,198.8 302.0,197.5 300.0,212.0" fill="url(#q183)" stroke="url(#q183)" stroke-width="0.6"/>
<polygon points="280.0,205.6 285.5,202.8 300.0,212.0" fill="url(#q184)" stroke="url(#q184)" stroke-width="0.6"/>
<polygon points="252.5,221.0 270.0,226.0 247.0,224.2" fill="url(#q185)" stroke="url(#q185)" stroke-width="0.6"/>
<polygon points="252.5,221.0 258.0,218.2 270.0,226.0" fill="url(#q186)" stroke="url(#q186)" stroke-width="0.6"/>
<polygon points="258.0,218.2 252.5,221.0 280.0,205.6" fill="url(#q187)" stroke="url(#q187)" stroke-width="0.6"/>
<polygon points="274.5,209.0 269.0,212.6 263.5,215.4" fill="url(#q188)" stroke="url(#q188)" stroke-width="0.6"/>
<polygon points="274.5,209.0 258.0,218.2 280.0,205.6" fill="url(#q189)" stroke="url(#q189)" stroke-width="0.6"/>
<polygon points="258.0,218.2 274.5,209.0 263.5,215.4" fill="url(#q190)" stroke="url(#q190)" stroke-width="0.6"/>
<polygon points="274.5,209.0 280.0,205.6 270.0,226.0" fill="url(#q191)" stroke="url(#q191)" stroke-width="0.6"/>
<polygon points="269.0,212.6 274.5,209.0 270.0,226.0" fill="url(#q192)" stroke="url(#q192)" stroke-width="0.6"/>
<polygon points="291.0,200.5 296.5,198.8 300.0,212.0" fill="url(#q193)" stroke="url(#q193)" stroke-width="0.6"/>
<polygon points="285.5,202.8 291.0,200.5 300.0,212.0" fill="url(#q194)" stroke="url(#q194)" stroke-width="0.6"/>
</g>
<g clip-path="url(#cF6)">
<polygon points="494.3,213.6 676.0,235.5 628.8,271.0 482.6,244.5" fill="#355a40"/>
<polygon points="628.8,271.0 640.0,250.0 676.0,235.5" fill="url(#q195)" stroke="url(#q195)" stroke-width="0.6"/>
<polygon points="599.6,229.0 494.3,213.6 676.0,235.5" fill="url(#q196)" stroke="url(#q196)" stroke-width="0.6"/>
<polygon points="569.7,261.8 599.6,258.8 628.8,271.0" fill="url(#q197)" stroke="url(#q197)" stroke-width="0.6"/>
<polygon points="599.6,258.8 569.7,261.8 599.6,229.0" fill="url(#q198)" stroke="url(#q198)" stroke-width="0.6"/>
<polygon points="599.6,258.8 640.0,250.0 628.8,271.0" fill="url(#q199)" stroke="url(#q199)" stroke-width="0.6"/>
<polygon points="640.0,250.0 599.6,258.8 599.6,229.0" fill="url(#q200)" stroke="url(#q200)" stroke-width="0.6"/>
<polygon points="659.5,235.0 599.6,229.0 676.0,235.5" fill="url(#q201)" stroke="url(#q201)" stroke-width="0.6"/>
<polygon points="640.0,250.0 659.5,235.0 676.0,235.5" fill="url(#q202)" stroke="url(#q202)" stroke-width="0.6"/>
<polygon points="659.5,235.0 640.0,250.0 599.6,229.0" fill="url(#q203)" stroke="url(#q203)" stroke-width="0.6"/>
<polygon points="489.0,223.0 486.0,235.0 482.6,244.5" fill="url(#q204)" stroke="url(#q204)" stroke-width="0.6"/>
<polygon points="494.3,213.6 510.0,222.0 489.0,223.0" fill="url(#q205)" stroke="url(#q205)" stroke-width="0.6"/>
<polygon points="510.0,222.0 486.0,235.0 489.0,223.0" fill="url(#q206)" stroke="url(#q206)" stroke-width="0.6"/>
<polygon points="486.0,235.0 510.0,245.0 482.6,244.5" fill="url(#q207)" stroke="url(#q207)" stroke-width="0.6"/>
<polygon points="510.0,222.0 510.0,245.0 486.0,235.0" fill="url(#q208)" stroke="url(#q208)" stroke-width="0.6"/>
<polygon points="510.0,245.0 569.7,261.8 482.6,244.5" fill="url(#q209)" stroke="url(#q209)" stroke-width="0.6"/>
<polygon points="510.0,245.0 539.8,247.0 569.7,261.8" fill="url(#q210)" stroke="url(#q210)" stroke-width="0.6"/>
<polygon points="539.8,229.0 494.3,213.6 599.6,229.0" fill="url(#q211)" stroke="url(#q211)" stroke-width="0.6"/>
<polygon points="539.8,229.0 510.0,222.0 494.3,213.6" fill="url(#q212)" stroke="url(#q212)" stroke-width="0.6"/>
<polygon points="569.7,261.8 539.8,229.0 599.6,229.0" fill="url(#q213)" stroke="url(#q213)" stroke-width="0.6"/>
<polygon points="539.8,247.0 539.8,229.0 569.7,261.8" fill="url(#q214)" stroke="url(#q214)" stroke-width="0.6"/>
<polygon points="539.8,229.0 510.0,245.0 510.0,222.0" fill="url(#q215)" stroke="url(#q215)" stroke-width="0.6"/>
<polygon points="510.0,245.0 539.8,229.0 539.8,247.0" fill="url(#q216)" stroke="url(#q216)" stroke-width="0.6"/>
</g>
<g clip-path="url(#cF7)">
<polygon points="482.6,244.5 628.8,271.0 593.6,335.7 560.6,312.3 540.0,300.0 514.3,275.8 485.0,258.5" fill="#71bb81"/>
<polygon points="628.8,271.0 510.0,265.0 482.6,244.5" fill="url(#q217)" stroke="url(#q217)" stroke-width="0.6"/>
<polygon points="569.7,294.7 510.0,265.0 628.8,271.0" fill="url(#q218)" stroke="url(#q218)" stroke-width="0.6"/>
<polygon points="593.6,335.7 623.6,279.8 628.8,271.0" fill="url(#q219)" stroke="url(#q219)" stroke-width="0.6"/>
<polygon points="623.6,279.8 569.7,294.7 628.8,271.0" fill="url(#q220)" stroke="url(#q220)" stroke-width="0.6"/>
<polygon points="510.0,265.0 485.0,258.5 482.6,244.5" fill="url(#q221)" stroke="url(#q221)" stroke-width="0.6"/>
<polygon points="593.7,324.7 623.6,279.8 593.6,335.7" fill="url(#q222)" stroke="url(#q222)" stroke-width="0.6"/>
<polygon points="623.6,279.8 593.7,324.7 569.7,294.7" fill="url(#q223)" stroke="url(#q223)" stroke-width="0.6"/>
<polygon points="514.3,275.8 510.0,265.0 569.7,294.7" fill="url(#q224)" stroke="url(#q224)" stroke-width="0.6"/>
<polygon points="540.0,300.0 514.3,275.8 569.7,294.7" fill="url(#q225)" stroke="url(#q225)" stroke-width="0.6"/>
<polygon points="514.3,275.8 485.0,258.5 510.0,265.0" fill="url(#q226)" stroke="url(#q226)" stroke-width="0.6"/>
<polygon points="514.3,275.8 540.0,300.0 485.0,258.5" fill="url(#q227)" stroke="url(#q227)" stroke-width="0.6"/>
<polygon points="560.0,312.0 540.0,300.0 569.7,294.7" fill="url(#q228)" stroke="url(#q228)" stroke-width="0.6"/>
<polygon points="593.7,324.7 560.0,312.0 569.7,294.7" fill="url(#q229)" stroke="url(#q229)" stroke-width="0.6"/>
<polygon points="540.0,300.0 560.0,312.0 593.6,335.7" fill="url(#q230)" stroke="url(#q230)" stroke-width="0.6"/>
<polygon points="560.0,312.0 593.7,324.7 593.6,335.7" fill="url(#q231)" stroke="url(#q231)" stroke-width="0.6"/>
</g>
<g clip-path="url(#cF8)">
<polygon points="628.8,271.0 688.0,356.5 684.4,360.5 679.4,362.5 674.4,363.2 668.0,363.2 661.5,362.5 654.4,361.0 647.2,359.5 638.6,356.8 630.0,353.8 622.2,350.3 614.3,346.7 607.2,343.2 600.0,339.5 593.6,335.7" fill="#62a370"/>
<polygon points="628.8,271.0 640.0,320.0 593.6,335.7" fill="url(#q232)" stroke="url(#q232)" stroke-width="0.6"/>
<polygon points="640.0,320.0 628.8,271.0 688.0,356.5" fill="url(#q233)" stroke="url(#q233)" stroke-width="0.6"/>
<polygon points="668.0,363.2 640.0,320.0 688.0,356.5" fill="url(#q234)" stroke="url(#q234)" stroke-width="0.6"/>
<polygon points="668.0,363.2 661.5,362.5 640.0,320.0" fill="url(#q235)" stroke="url(#q235)" stroke-width="0.6"/>
<polygon points="674.4,363.2 668.0,363.2 688.0,356.5" fill="url(#q236)" stroke="url(#q236)" stroke-width="0.6"/>
<polygon points="647.2,359.5 638.6,356.8 640.0,320.0" fill="url(#q237)" stroke="url(#q237)" stroke-width="0.6"/>
<polygon points="614.3,346.7 607.2,343.2 640.0,320.0" fill="url(#q238)" stroke="url(#q238)" stroke-width="0.6"/>
<polygon points="622.2,350.3 614.3,346.7 640.0,320.0" fill="url(#q239)" stroke="url(#q239)" stroke-width="0.6"/>
<polygon points="684.4,360.5 679.4,362.5 688.0,356.5" fill="url(#q240)" stroke="url(#q240)" stroke-width="0.6"/>
<polygon points="679.4,362.5 674.4,363.2 688.0,356.5" fill="url(#q241)" stroke="url(#q241)" stroke-width="0.6"/>
<polygon points="661.5,362.5 654.4,361.0 640.0,320.0" fill="url(#q242)" stroke="url(#q242)" stroke-width="0.6"/>
<polygon points="654.4,361.0 647.2,359.5 640.0,320.0" fill="url(#q243)" stroke="url(#q243)" stroke-width="0.6"/>
<polygon points="647.2,359.5 654.4,361.0 661.5,362.5" fill="url(#q244)" stroke="url(#q244)" stroke-width="0.6"/>
<polygon points="640.0,320.0 600.0,339.5 593.6,335.7" fill="url(#q245)" stroke="url(#q245)" stroke-width="0.6"/>
<polygon points="607.2,343.2 600.0,339.5 640.0,320.0" fill="url(#q246)" stroke="url(#q246)" stroke-width="0.6"/>
<polygon points="638.6,356.8 630.0,353.8 640.0,320.0" fill="url(#q247)" stroke="url(#q247)" stroke-width="0.6"/>
<polygon points="630.0,353.8 622.2,350.3 640.0,320.0" fill="url(#q248)" stroke="url(#q248)" stroke-width="0.6"/>
</g>
<g clip-path="url(#cF9)">
<polygon points="628.8,271.0 676.0,235.5 706.0,275.0 706.0,290.0 701.0,314.5 699.0,340.7 692.0,352.0 688.0,356.5" fill="#2b4833"/>
<polygon points="689.4,264.8 676.0,235.5 706.0,275.0" fill="url(#q249)" stroke="url(#q249)" stroke-width="0.6"/>
<polygon points="689.4,264.8 674.4,264.8 676.0,235.5" fill="url(#q250)" stroke="url(#q250)" stroke-width="0.6"/>
<polygon points="647.5,270.8 640.0,300.0 628.8,271.0" fill="url(#q251)" stroke="url(#q251)" stroke-width="0.6"/>
<polygon points="676.0,235.5 647.5,270.8 628.8,271.0" fill="url(#q252)" stroke="url(#q252)" stroke-width="0.6"/>
<polygon points="674.4,264.8 647.5,270.8 676.0,235.5" fill="url(#q253)" stroke="url(#q253)" stroke-width="0.6"/>
<polygon points="683.4,324.7 670.0,340.0 659.5,309.7" fill="url(#q254)" stroke="url(#q254)" stroke-width="0.6"/>
<polygon points="670.0,340.0 640.0,300.0 659.5,309.7" fill="url(#q255)" stroke="url(#q255)" stroke-width="0.6"/>
<polygon points="660.0,280.0 647.5,270.8 674.4,264.8" fill="url(#q256)" stroke="url(#q256)" stroke-width="0.6"/>
<polygon points="640.0,300.0 660.0,280.0 659.5,309.7" fill="url(#q257)" stroke="url(#q257)" stroke-width="0.6"/>
<polygon points="647.5,270.8 660.0,280.0 640.0,300.0" fill="url(#q258)" stroke="url(#q258)" stroke-width="0.6"/>
<polygon points="695.4,330.6 683.4,324.7 701.0,314.5" fill="url(#q259)" stroke="url(#q259)" stroke-width="0.6"/>
<polygon points="699.0,340.7 695.4,330.6 701.0,314.5" fill="url(#q260)" stroke="url(#q260)" stroke-width="0.6"/>
<polygon points="695.4,330.6 670.0,340.0 683.4,324.7" fill="url(#q261)" stroke="url(#q261)" stroke-width="0.6"/>
<polygon points="670.0,340.0 692.0,352.0 688.0,356.5" fill="url(#q262)" stroke="url(#q262)" stroke-width="0.6"/>
<polygon points="695.4,330.6 692.0,352.0 670.0,340.0" fill="url(#q263)" stroke="url(#q263)" stroke-width="0.6"/>
<polygon points="692.0,352.0 695.4,330.6 699.0,340.7" fill="url(#q264)" stroke="url(#q264)" stroke-width="0.6"/>
<polygon points="706.0,290.0 699.0,340.7 701.0,314.5" fill="url(#q265)" stroke="url(#q265)" stroke-width="0.6"/>
<polygon points="689.4,264.8 680.0,300.0 674.4,264.8" fill="url(#q266)" stroke="url(#q266)" stroke-width="0.6"/>
<polygon points="680.0,300.0 660.0,280.0 674.4,264.8" fill="url(#q267)" stroke="url(#q267)" stroke-width="0.6"/>
<polygon points="660.0,280.0 680.0,300.0 659.5,309.7" fill="url(#q268)" stroke="url(#q268)" stroke-width="0.6"/>
<polygon points="680.0,300.0 683.4,324.7 659.5,309.7" fill="url(#q269)" stroke="url(#q269)" stroke-width="0.6"/>
<polygon points="683.4,324.7 680.0,300.0 701.0,314.5" fill="url(#q270)" stroke="url(#q270)" stroke-width="0.6"/>
<polygon points="701.4,288.8 680.0,300.0 689.4,264.8" fill="url(#q271)" stroke="url(#q271)" stroke-width="0.6"/>
<polygon points="701.4,288.8 689.4,264.8 706.0,275.0" fill="url(#q272)" stroke="url(#q272)" stroke-width="0.6"/>
<polygon points="706.0,290.0 701.4,288.8 706.0,275.0" fill="url(#q273)" stroke="url(#q273)" stroke-width="0.6"/>
<polygon points="701.4,288.8 706.0,290.0 701.0,314.5" fill="url(#q274)" stroke="url(#q274)" stroke-width="0.6"/>
<polygon points="680.0,300.0 701.4,288.8 701.0,314.5" fill="url(#q275)" stroke="url(#q275)" stroke-width="0.6"/>
</g>
<g fill="none" stroke="#ff0000" stroke-width="2" shape-rendering="crispEdges">
<path d="M274.0 303.0 L187.2 432.0"/>
<path d="M274.0 303.0 L188.3 444.2"/>
<path d="M274.0 303.0 L191.0 453.0"/>
<path d="M274.0 303.0 L195.4 460.7"/>
<path d="M274.0 303.0 L202.0 466.2"/>
<path d="M274.0 303.0 L210.8 471.7"/>
<path d="M274.0 303.0 L220.7 474.5"/>
<path d="M274.0 303.0 L232.8 474.5"/>
<path d="M274.0 303.0 L245.0 471.0"/>
<path d="M274.0 303.0 L258.0 467.0"/>
<path d="M274.0 303.0 L270.7 461.0"/>
<path d="M274.0 303.0 L282.9 452.3"/>
<path d="M274.0 303.0 L294.2 443.6"/>
<path d="M274.0 303.0 L304.7 432.3"/>
<path d="M274.0 303.0 L312.5 421.0"/>
<path d="M274.0 303.0 L320.4 410.5"/>
<path d="M274.0 303.0 L325.0 401.0"/>
<path d="M628.8 271.0 L593.6 335.7"/>
<path d="M628.8 271.0 L600.0 339.3"/>
<path d="M628.8 271.0 L607.2 342.9"/>
<path d="M628.8 271.0 L614.3 346.5"/>
<path d="M628.8 271.0 L622.2 350.0"/>
<path d="M628.8 271.0 L630.0 353.6"/>
<path d="M628.8 271.0 L638.6 356.5"/>
<path d="M628.8 271.0 L647.2 359.3"/>
<path d="M628.8 271.0 L654.4 360.8"/>
<path d="M628.8 271.0 L661.5 362.2"/>
<path d="M628.8 271.0 L668.0 362.9"/>
<path d="M628.8 271.0 L674.4 362.9"/>
<path d="M628.8 271.0 L679.4 362.2"/>
<path d="M628.8 271.0 L684.4 360.0"/>
<path d="M628.8 271.0 L688.0 356.5"/>
</g>
<g fill="none" stroke="#ff0000" stroke-width="2" stroke-linejoin="round" shape-rendering="crispEdges">
<path d="M231.7 237.3 L236.0 233.0 L241.5 228.4 L247.0 224.2 L252.5 221.0 L258.0 218.2 L263.5 215.4 L269.0 212.6 L274.5 209.0 L280.0 205.6 L285.5 202.8 L291.0 200.5 L296.5 198.8 L302.0 197.5 L312.0 194.8 L332.0 190.8 L352.0 187.9 L372.0 184.8 L394.7 180.9 L418.1 180.9 L424.0 182.5 L428.0 185.5 L431.0 188.5 L451.0 194.5 L494.3 213.6 L676.0 235.5 L706.0 275.0 L706.0 290.0 L701.0 314.5 L699.0 340.7 L692.0 352.0 L688.0 356.5 L684.4 360.5 L679.4 362.5 L674.4 363.2 L668.0 363.2 L661.5 362.5 L654.4 361.0 L647.2 359.5 L638.6 356.8 L630.0 353.8 L622.2 350.3 L614.3 346.7 L607.2 343.2 L600.0 339.5 L593.6 335.7 L560.6 312.3 L540.0 300.0 L514.3 275.8 L485.0 258.5 L420.0 282.0 L405.2 285.7 L384.6 298.2 L364.0 315.8 L352.3 326.0 L346.4 332.0 L344.2 340.0 L335.0 370.7 L331.7 380.0 L325.0 401.0 L320.4 410.5 L312.5 421.0 L304.7 432.3 L294.2 443.6 L282.9 452.3 L270.7 461.0 L258.0 467.5 L245.0 471.5 L232.8 475.0 L220.7 475.5 L210.8 472.5 L202.0 467.0 L195.4 461.0 L191.0 453.5 L188.3 444.5 L187.0 432.0 L186.5 336.0 L181.3 330.0 L175.8 314.8 L162.9 308.9 L155.6 308.5 L148.8 299.7 L148.8 285.0 L150.1 283.2 L178.5 244.0 L178.5 244.0 Z"/>
<path d="M178.5 244.0 L231.7 237.3 L442.8 208.0 L494.3 213.6"/>
<path d="M178.5 244.0 L274.0 303.0"/>
<path d="M274.0 303.0 L482.6 244.5 L628.8 271.0 L676.0 235.5"/>
<path d="M482.6 244.5 L485.0 258.5"/>
</g>
<polygon points="430,188 451,194.5 443,207.5" fill="#ff0000"/>
<path d="M432.5 187 L429.5 234" stroke="#0000ff" stroke-width="1" shape-rendering="crispEdges"/>
</svg>
</body></html>
